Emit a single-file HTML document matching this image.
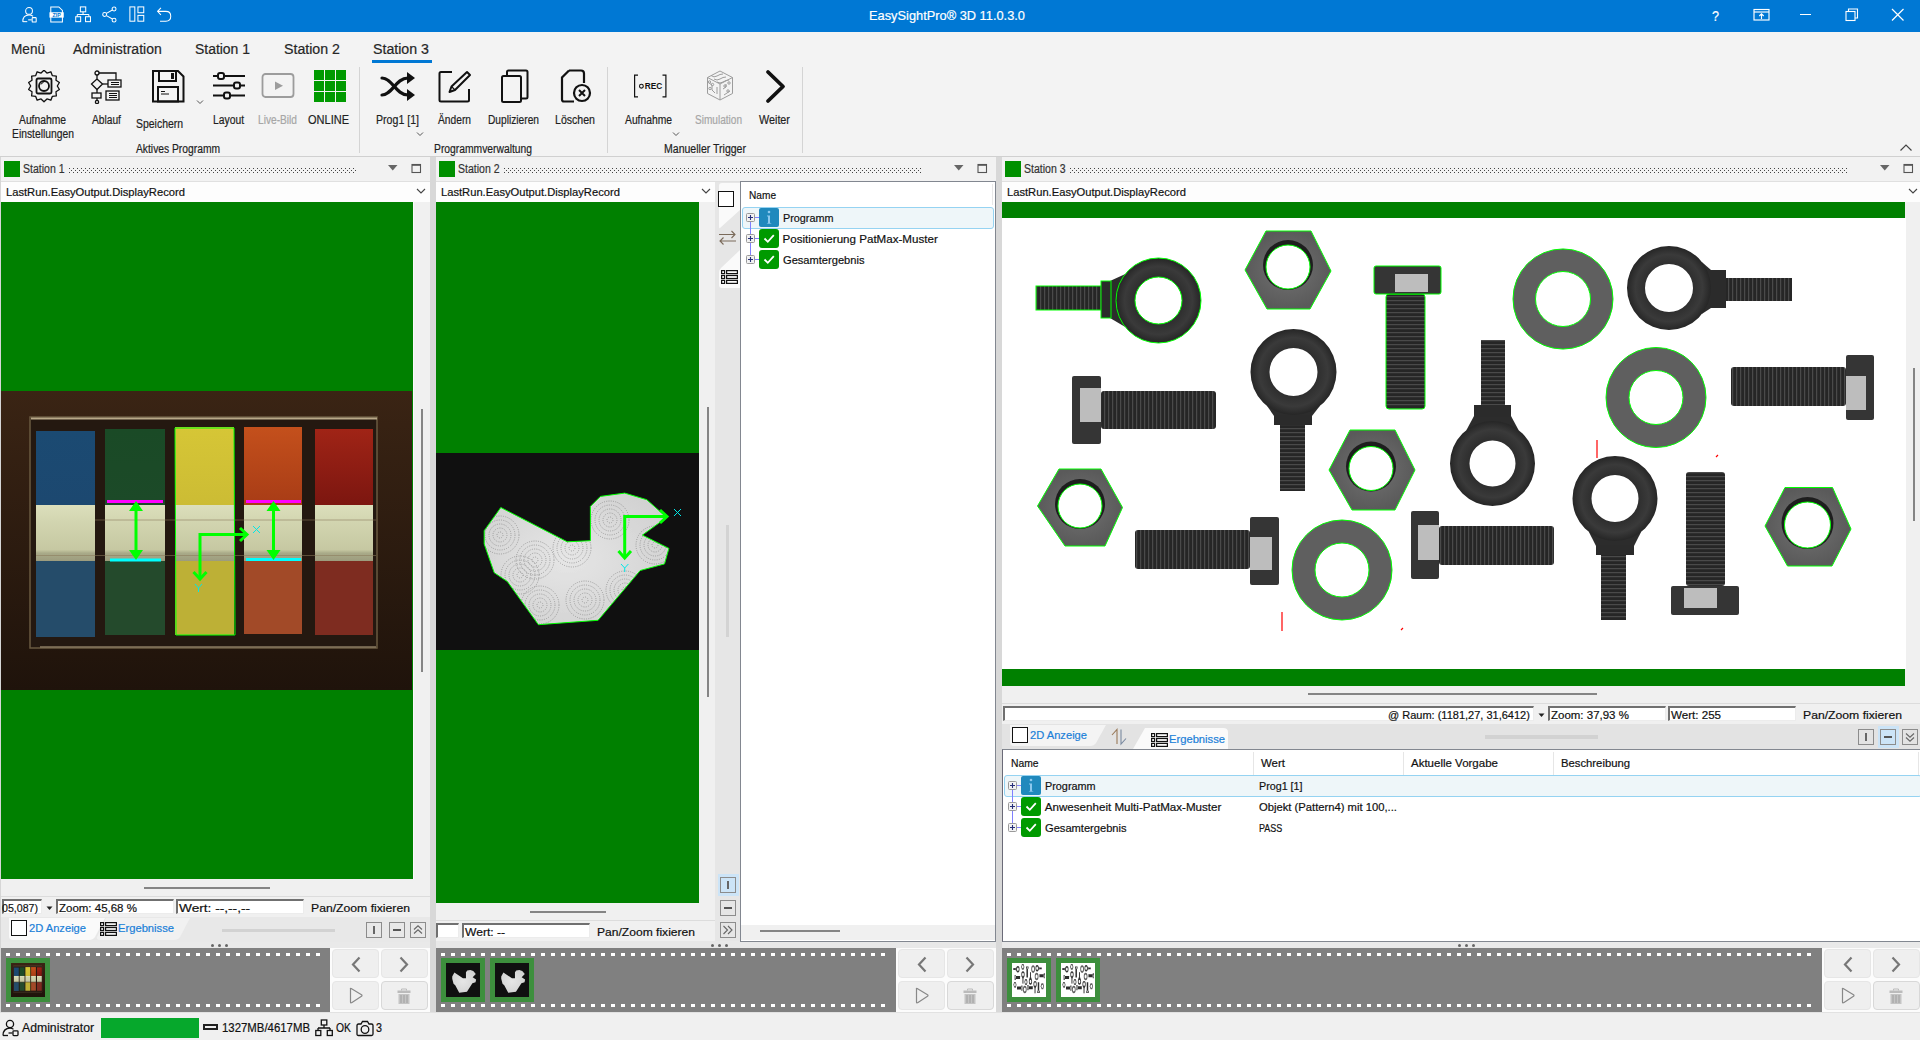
<!DOCTYPE html>
<html><head><meta charset="utf-8"><style>
html,body{margin:0;padding:0;width:1920px;height:1040px;overflow:hidden;background:#f0f0f0;position:relative;font-family:"Liberation Sans",sans-serif}
.t{position:absolute;white-space:nowrap;line-height:1.15;transform-origin:0 0;-webkit-text-stroke:0.2px currentColor}
.r{position:absolute;display:block}
</style></head><body>
<div class="r" style="left:0px;top:0px;width:1920px;height:32px;background:#0078d4;"></div>
<svg class="r" style="left:21.0px;top:6.0px;" width="16.99" height="17" viewBox="0 0 19 19"><g fill="none" stroke="#fff" stroke-width="1.15"><circle cx="9" cy="5.5" r="3.8"/><path d="M2 17.5 C2 12 5 10 9 10 C11 10 12.5 10.8 13.5 11.5"/><path d="M2 17.5 H7"/><path d="M8 15.5 H12"/><rect x="12.5" y="13" width="4.5" height="5" rx="0.8"/></g></svg>
<svg class="r" style="left:49.0px;top:6.0px;" width="15.21" height="17" viewBox="0 0 17 19"><g fill="none" stroke="#fff" stroke-width="1.15"><path d="M2 1 H11 L15 5 V18 H2 Z"/></g><rect x="0.5" y="7" width="16" height="6" fill="#fff"/><text x="8.5" y="12.3" font-size="6" font-weight="bold" text-anchor="middle" fill="#0078d4" font-family="Liberation Sans">ZIP</text></svg>
<svg class="r" style="left:75.0px;top:6.0px;" width="16.99" height="17" viewBox="0 0 19 19"><g fill="none" stroke="#fff" stroke-width="1.15"><rect x="6" y="1" width="6" height="5.5"/><path d="M9 6.5 V9.5 M2.5 9.5 H15.5 M2.5 9.5 V12 M15.5 9.5 V12"/><rect x="0.8" y="12" width="5.5" height="5.5"/><rect x="11.8" y="12" width="5.5" height="5.5"/></g></svg>
<svg class="r" style="left:102.0px;top:6.0px;" width="16.1" height="17" viewBox="0 0 18 19"><g fill="none" stroke="#fff" stroke-width="1.15"><circle cx="13.5" cy="3.3" r="2.2"/><circle cx="3" cy="9.5" r="2.2"/><circle cx="13.5" cy="15.8" r="2.2"/><path d="M5 8.3 L11.6 4.5 M5 10.7 L11.6 14.6"/></g></svg>
<svg class="r" style="left:129.0px;top:6.0px;" width="16.99" height="17" viewBox="0 0 19 19"><g fill="none" stroke="#fff" stroke-width="1.15"><rect x="1" y="1" width="5.5" height="16"/><rect x="10" y="1" width="6.5" height="6.5"/><rect x="10" y="10.5" width="6.5" height="6.5"/></g></svg>
<svg class="r" style="left:156.0px;top:6.0px;" width="16.99" height="17" viewBox="0 0 19 19"><g fill="none" stroke="#fff" stroke-width="1.15"><path d="M2 6 H11 C14.5 6 16.5 8.5 16.5 11.5 C16.5 14.5 14.5 17 11 17 H4.5"/><path d="M5.5 2 L1.8 6 L5.5 10"/></g></svg>
<div class="t" style="left:869.00px;top:8.73px;font-size:13px;color:#fff;transform:scaleX(0.9861);">EasySightPro® 3D 11.0.3.0</div>
<div class="t" style="left:1712.00px;top:6.72px;font-size:15px;color:#fff;transform:scaleX(0.8434);">?</div>
<svg class="r" style="left:1753px;top:8px;" width="18" height="14" viewBox="0 0 18 14"><g fill="none" stroke="#fff" stroke-width="1.15"><rect x="1" y="1.5" width="15" height="10.5"/><path d="M1 4 H16"/><path d="M8.5 11 V6 M6.3 8 L8.5 5.8 L10.7 8"/></g></svg>
<div class="r" style="left:1800px;top:14px;width:11px;height:1px;background:#fff;"></div>
<svg class="r" style="left:1845px;top:8px;" width="14" height="14" viewBox="0 0 14 14"><g fill="none" stroke="#fff" stroke-width="1.1"><rect x="1" y="3.5" width="9" height="9"/><path d="M3.5 3.5 V1 H12.5 V10 H10"/></g></svg>
<svg class="r" style="left:1891px;top:8px;" width="14" height="14" viewBox="0 0 14 14"><g fill="none" stroke="#fff" stroke-width="1.2"><path d="M1 1 L12.5 12.5 M12.5 1 L1 12.5"/></g></svg>
<div class="r" style="left:0px;top:32px;width:1920px;height:125px;background:#f3f3f3;"></div>
<div class="r" style="left:0px;top:156px;width:1920px;height:2px;background:#d0d0d0;"></div>
<div class="t" style="left:11.00px;top:41.33px;font-size:14px;color:#262626;transform:scaleX(0.9714);">Menü</div>
<div class="t" style="left:73.00px;top:41.33px;font-size:14px;color:#262626;">Administration</div>
<div class="t" style="left:195.00px;top:41.33px;font-size:14px;color:#262626;transform:scaleX(0.9946);">Station 1</div>
<div class="t" style="left:284.00px;top:41.33px;font-size:14px;color:#262626;transform:scaleX(1.0127);">Station 2</div>
<div class="t" style="left:373.00px;top:41.33px;font-size:14px;color:#262626;transform:scaleX(1.0127);">Station 3</div>
<div class="r" style="left:372px;top:60px;width:60px;height:3px;background:#0078d4;"></div>
<div class="t" style="left:19.00px;top:114.44px;font-size:12px;color:#1f1f1f;transform:scaleX(0.8592);">Aufnahme</div>
<div class="t" style="left:12.00px;top:127.94px;font-size:12px;color:#1f1f1f;transform:scaleX(0.8599);">Einstellungen</div>
<div class="t" style="left:92.00px;top:114.44px;font-size:12px;color:#1f1f1f;transform:scaleX(0.8504);">Ablauf</div>
<div class="t" style="left:136.00px;top:117.64px;font-size:12px;color:#1f1f1f;transform:scaleX(0.8704);">Speichern</div>
<div class="t" style="left:213.00px;top:114.44px;font-size:12px;color:#1f1f1f;transform:scaleX(0.8611);">Layout</div>
<div class="t" style="left:258.00px;top:114.44px;font-size:12px;color:#a6a6a6;transform:scaleX(0.8478);">Live-Bild</div>
<div class="t" style="left:308.00px;top:114.44px;font-size:12px;color:#1f1f1f;transform:scaleX(0.9172);">ONLINE</div>
<div class="t" style="left:136.00px;top:143.14px;font-size:12px;color:#1f1f1f;transform:scaleX(0.8571);">Aktives Programm</div>
<div class="t" style="left:376.00px;top:114.44px;font-size:12px;color:#1f1f1f;transform:scaleX(0.8830);">Prog1 [1]</div>
<div class="t" style="left:438.00px;top:114.44px;font-size:12px;color:#1f1f1f;transform:scaleX(0.8527);">Ändern</div>
<div class="t" style="left:488.00px;top:114.44px;font-size:12px;color:#1f1f1f;transform:scaleX(0.8500);">Duplizieren</div>
<div class="t" style="left:555.00px;top:114.44px;font-size:12px;color:#1f1f1f;transform:scaleX(0.8811);">Löschen</div>
<div class="t" style="left:625.00px;top:114.44px;font-size:12px;color:#1f1f1f;transform:scaleX(0.8592);">Aufnahme</div>
<div class="t" style="left:695.00px;top:114.44px;font-size:12px;color:#a6a6a6;transform:scaleX(0.8393);">Simulation</div>
<div class="t" style="left:759.00px;top:114.44px;font-size:12px;color:#1f1f1f;transform:scaleX(0.8986);">Weiter</div>
<div class="t" style="left:434.00px;top:143.14px;font-size:12px;color:#1f1f1f;transform:scaleX(0.8596);">Programmverwaltung</div>
<div class="t" style="left:664.00px;top:143.14px;font-size:12px;color:#1f1f1f;transform:scaleX(0.8779);">Manueller Trigger</div>
<div class="r" style="left:359px;top:67px;width:1px;height:86px;background:#d4d4d4;"></div>
<div class="r" style="left:607px;top:67px;width:1px;height:86px;background:#d4d4d4;"></div>
<div class="r" style="left:802px;top:67px;width:1px;height:86px;background:#d4d4d4;"></div>
<svg class="r" style="left:196px;top:99px;" width="8" height="6" viewBox="0 0 8 6"><path d="M1 1.5 L4 4.5 L7 1.5" fill="none" stroke="#555" stroke-width="1"/></svg>
<svg class="r" style="left:416px;top:131px;" width="8" height="6" viewBox="0 0 8 6"><path d="M1 1.5 L4 4.5 L7 1.5" fill="none" stroke="#555" stroke-width="1"/></svg>
<svg class="r" style="left:672px;top:131px;" width="8" height="6" viewBox="0 0 8 6"><path d="M1 1.5 L4 4.5 L7 1.5" fill="none" stroke="#555" stroke-width="1"/></svg>
<svg class="r" style="left:1899px;top:143px;" width="14" height="9" viewBox="0 0 14 9"><path d="M1.5 7.5 L7 2 L12.5 7.5" fill="none" stroke="#444" stroke-width="1.2"/></svg>
<svg class="r" style="left:28px;top:70px;" width="33" height="33" viewBox="0 0 33 33"><polygon points="16.00,0.20 18.96,3.03 22.86,1.76 24.29,5.60 28.35,6.15 27.98,10.23 31.40,12.48 29.30,16.00 31.40,19.52 27.98,21.77 28.35,25.85 24.29,26.40 22.86,30.24 18.96,28.97 16.00,31.80 13.04,28.97 9.14,30.24 7.71,26.40 3.65,25.85 4.02,21.77 0.60,19.52 2.70,16.00 0.60,12.48 4.02,10.23 3.65,6.15 7.71,5.60 9.14,1.76 13.04,3.03" fill="none" stroke="#111" stroke-width="1.3" stroke-linejoin="round"/><rect x="8.5" y="8.5" width="15" height="15" rx="1.5" fill="none" stroke="#111" stroke-width="1.8"/><circle cx="16" cy="16" r="5" fill="none" stroke="#111" stroke-width="1.8"/><path d="M13 14.5 A3 3 0 0 1 15.5 12.5" fill="none" stroke="#111" stroke-width="1"/></svg>
<svg class="r" style="left:90px;top:69px;" width="35" height="35" viewBox="0 0 35 35"><g fill="none" stroke="#111" stroke-width="1.3"><circle cx="7" cy="4" r="2"/><path d="M9 4 H26 V11"/><path d="M7 6 V10 L1.5 15 L7 20.5 L12.5 15 L7 10"/><path d="M12.5 15 H18"/><rect x="18" y="11" width="13" height="7"/><path d="M7 20.5 V24"/><rect x="2" y="24" width="9" height="5"/><path d="M7 29 V32"/><circle cx="7" cy="33" r="1.6"/><rect x="16" y="22" width="13" height="9"/></g><g stroke="#111" stroke-width="1"><path d="M21 13.5 H29 M21 15.5 H29 M19 24.5 H27 M19 26.5 H27 M19 28.5 H27"/></g></svg>
<svg class="r" style="left:152px;top:70px;" width="33" height="33" viewBox="0 0 33 33"><g fill="none" stroke="#111" stroke-width="2"><path d="M1 1 H26 L31.5 6.5 V31.5 H1 Z"/><path d="M7 1 V11 H24 V1"/><rect x="6" y="17" width="20" height="14.5"/></g><rect x="19" y="3" width="3" height="6" fill="#111"/><path d="M9 21.5 H13 M9 24 H17" stroke="#111" stroke-width="1"/></svg>
<svg class="r" style="left:212px;top:70px;" width="34" height="33" viewBox="0 0 34 33"><g stroke="#111" stroke-width="2"><path d="M1 6 H6 M12 6 H33 M1 15.5 H22 M28 15.5 H33 M1 25.5 H12 M18 25.5 H33"/></g><g fill="#f3f3f3" stroke="#111" stroke-width="2"><rect x="6" y="3" width="6" height="6" rx="2"/><rect x="22" y="12.5" width="6" height="6" rx="2"/><rect x="12" y="22.5" width="6" height="6" rx="2"/></g></svg>
<svg class="r" style="left:261px;top:73px;" width="35" height="26" viewBox="0 0 35 26"><rect x="1.5" y="1" width="31" height="23" rx="3" fill="none" stroke="#9c9c9c" stroke-width="1.8"/><path d="M14 8.5 L22 12.8 L14 17 Z" fill="#9c9c9c"/></svg>
<svg class="r" style="left:314px;top:70px;" width="33" height="33" viewBox="0 0 33 33"><rect x="0" y="0" width="10" height="10" fill="#009a00"/><rect x="11" y="0" width="10" height="10" fill="#009a00"/><rect x="22" y="0" width="10" height="10" fill="#009a00"/><rect x="0" y="11" width="10" height="10" fill="#009a00"/><rect x="11" y="11" width="10" height="10" fill="#009a00"/><rect x="22" y="11" width="10" height="10" fill="#009a00"/><rect x="0" y="22" width="10" height="10" fill="#009a00"/><rect x="11" y="22" width="10" height="10" fill="#009a00"/><rect x="22" y="22" width="10" height="10" fill="#009a00"/></svg>
<svg class="r" style="left:380px;top:71px;" width="36" height="31" viewBox="0 0 36 31"><g fill="none" stroke="#111" stroke-width="3.2" stroke-linecap="round"><path d="M2 7 C12 7 16 24 28 24"/><path d="M2 24 C12 24 16 7 28 7"/></g><path d="M27 1 L35 7 L27 13 Z M27 18 L35 24 L27 30 Z" fill="#111"/></svg>
<svg class="r" style="left:438px;top:69px;" width="35" height="35" viewBox="0 0 35 35"><g fill="none" stroke="#111" stroke-width="2" stroke-linejoin="round"><path d="M14 3 H3 Q1.5 3 1.5 4.5 V31 Q1.5 32.5 3 32.5 H29.5 Q31 32.5 31 31 V20"/><path d="M29 3 L32 6 L17 21 L11.5 23 L13.5 17.5 Z"/></g><path d="M13.5 17.5 L17 21" stroke="#111" stroke-width="1.2"/></svg>
<svg class="r" style="left:500px;top:69px;" width="30" height="35" viewBox="0 0 30 35"><g fill="none" stroke="#111" stroke-width="2"><rect x="2" y="7" width="19" height="26" rx="1.5"/><path d="M7 7 V3 Q7 1.5 8.5 1.5 H26 Q27.5 1.5 27.5 3 V28 Q27.5 29.5 26 29.5 H21"/></g></svg>
<svg class="r" style="left:560px;top:69px;" width="32" height="35" viewBox="0 0 32 35"><g fill="none" stroke="#111" stroke-width="2.2"><path d="M9 1.5 H21 Q24 1.5 24 4.5 V14"/><path d="M14 32.5 H4 Q2 32.5 2 30.5 V8.5 L9 1.5"/></g><circle cx="22" cy="24" r="8" fill="#f3f3f3" stroke="#111" stroke-width="2.2"/><path d="M19 21 L25 27 M25 21 L19 27" stroke="#111" stroke-width="2"/></svg>
<svg class="r" style="left:633px;top:74px;" width="35" height="25" viewBox="0 0 35 25"><g fill="none" stroke="#111" stroke-width="1.2"><path d="M5 1.2 H1.6 V22.8 H5"/><path d="M29.5 1.2 H32.9 V22.8 H29.5"/></g><circle cx="8.4" cy="12.2" r="1.9" fill="none" stroke="#111" stroke-width="1.1"/><text x="20.5" y="15.3" font-size="8.3" font-weight="bold" text-anchor="middle" fill="#111" font-family="Liberation Sans">REC</text></svg>
<svg class="r" style="left:705px;top:70px;" width="31" height="33" viewBox="0 0 31 33"><g fill="none" stroke="#9c9c9c" stroke-width="1" stroke-linejoin="round"><path d="M15 1 L27.5 7.5 V23.5 L15 30 L2.5 23.5 V7.5 Z"/><path d="M2.5 7.5 L15 14 L27.5 7.5 M15 14 V30"/><path d="M6 5.5 Q9 8 12 6 T18 4 M9 9 Q12 11 15 9 T21 7 M12 12 Q15 14 18 12 T24 10"/><path d="M4 13 L7 15 V20 L10 23 M12 17 V24 M18 19 L21 17 V14 M19 25 L25 21"/><circle cx="4.5" cy="12" r="1.2"/><circle cx="7.5" cy="14.5" r="1.2"/><circle cx="20" cy="16" r="1.2"/><circle cx="24" cy="13" r="1.2"/><circle cx="5" cy="18.5" r="1.2"/><circle cx="23" cy="21" r="1.2"/></g></svg>
<svg class="r" style="left:764px;top:69px;" width="23" height="35" viewBox="0 0 23 35"><path d="M4 3 L19 17.5 L4 32" fill="none" stroke="#111" stroke-width="3.8" stroke-linecap="round" stroke-linejoin="round"/></svg>
<div class="r" style="left:0px;top:157px;width:1px;height:855px;background:#d6d6d6;"></div>
<div class="r" style="left:430px;top:157px;width:6px;height:855px;background:#d8d8d8;"></div>
<div class="r" style="left:996px;top:157px;width:6px;height:855px;background:#d8d8d8;"></div>
<div class="r" style="left:1px;top:157px;width:429px;height:24px;background:#f2f2f2;"></div>
<div class="r" style="left:1px;top:181px;width:429px;height:1px;background:#e0e0e0;"></div>
<div class="r" style="left:4px;top:161px;width:16px;height:16px;background:#009000;"></div>
<div class="t" style="left:22.50px;top:161.69px;font-size:12.5px;color:#333;transform:scaleX(0.8418);">Station 1</div>
<svg class="r" style="left:69px;top:167px;" width="288" height="7" viewBox="0 0 288 7"><defs><pattern id="gp69" width="4" height="4" patternUnits="userSpaceOnUse"><rect x="0" y="1" width="1" height="1" fill="#444"/><rect x="2" y="3" width="1" height="1" fill="#444"/></pattern></defs><rect x="0" y="0" width="288" height="6" fill="url(#gp69)"/></svg>
<svg class="r" style="left:388px;top:165px;" width="10" height="6" viewBox="0 0 10 6"><path d="M0 0 H9.5 L4.75 5.5 Z" fill="#666"/></svg>
<svg class="r" style="left:411px;top:163px;" width="11" height="11" viewBox="0 0 11 11"><rect x="1" y="1.5" width="8.5" height="8" fill="none" stroke="#555" stroke-width="1.1"/><rect x="1" y="1" width="8.5" height="1.8" fill="#555"/></svg>
<div class="r" style="left:1px;top:182px;width:429px;height:20px;background:#fdfdfd;"></div>
<div class="t" style="left:5.50px;top:185.00px;font-size:11.6px;color:#111;transform:scaleX(0.9639);">LastRun.EasyOutput.DisplayRecord</div>
<svg class="r" style="left:416px;top:188px;" width="10" height="7" viewBox="0 0 10 7"><path d="M1 1 L5 5 L9 1" fill="none" stroke="#444" stroke-width="1.1"/></svg>
<div class="r" style="left:1px;top:202px;width:412px;height:677px;background:#008000;"></div>
<div class="r" style="left:413px;top:202px;width:17px;height:694px;background:#f0f0f0;"></div>
<div class="r" style="left:413px;top:202px;width:1px;height:677px;background:#fafafa;"></div>
<div class="r" style="left:421px;top:409px;width:2px;height:263px;background:#858585;"></div>
<div class="r" style="left:1px;top:879px;width:412px;height:17px;background:#f0f0f0;"></div>
<div class="r" style="left:144px;top:887px;width:126px;height:2px;background:#858585;"></div>
<div class="r" style="left:1px;top:896px;width:429px;height:1px;background:#dcdcdc;"></div>
<div class="r" style="left:1px;top:897px;width:429px;height:20px;background:#f0f0f0;"></div>
<div class="r" style="left:436px;top:157px;width:560px;height:24px;background:#f2f2f2;"></div>
<div class="r" style="left:436px;top:181px;width:560px;height:1px;background:#e0e0e0;"></div>
<div class="r" style="left:439px;top:161px;width:16px;height:16px;background:#009000;"></div>
<div class="t" style="left:457.50px;top:161.69px;font-size:12.5px;color:#333;transform:scaleX(0.8418);">Station 2</div>
<svg class="r" style="left:504px;top:167px;" width="418" height="7" viewBox="0 0 418 7"><defs><pattern id="gp504" width="4" height="4" patternUnits="userSpaceOnUse"><rect x="0" y="1" width="1" height="1" fill="#444"/><rect x="2" y="3" width="1" height="1" fill="#444"/></pattern></defs><rect x="0" y="0" width="418" height="6" fill="url(#gp504)"/></svg>
<svg class="r" style="left:954px;top:165px;" width="10" height="6" viewBox="0 0 10 6"><path d="M0 0 H9.5 L4.75 5.5 Z" fill="#666"/></svg>
<svg class="r" style="left:977px;top:163px;" width="11" height="11" viewBox="0 0 11 11"><rect x="1" y="1.5" width="8.5" height="8" fill="none" stroke="#555" stroke-width="1.1"/><rect x="1" y="1" width="8.5" height="1.8" fill="#555"/></svg>
<div class="r" style="left:436px;top:182px;width:279px;height:20px;background:#fdfdfd;"></div>
<div class="t" style="left:440.50px;top:185.00px;font-size:11.6px;color:#111;transform:scaleX(0.9639);">LastRun.EasyOutput.DisplayRecord</div>
<svg class="r" style="left:701px;top:188px;" width="10" height="7" viewBox="0 0 10 7"><path d="M1 1 L5 5 L9 1" fill="none" stroke="#444" stroke-width="1.1"/></svg>
<div class="r" style="left:436px;top:202px;width:263px;height:701px;background:#008000;"></div>
<div class="r" style="left:699px;top:202px;width:16px;height:718px;background:#f0f0f0;"></div>
<div class="r" style="left:707px;top:407px;width:2px;height:290px;background:#858585;"></div>
<div class="r" style="left:436px;top:903px;width:263px;height:17px;background:#f0f0f0;"></div>
<div class="r" style="left:530px;top:911px;width:76px;height:2px;background:#858585;"></div>
<div class="r" style="left:436px;top:920px;width:279px;height:1px;background:#dcdcdc;"></div>
<div class="r" style="left:436px;top:921px;width:279px;height:20px;background:#f0f0f0;"></div>
<div class="r" style="left:436px;top:941px;width:560px;height:7px;background:#e8e8e8;"></div>
<div class="r" style="left:1002px;top:157px;width:918px;height:24px;background:#f2f2f2;"></div>
<div class="r" style="left:1002px;top:181px;width:918px;height:1px;background:#e0e0e0;"></div>
<div class="r" style="left:1005px;top:161px;width:16px;height:16px;background:#009000;"></div>
<div class="t" style="left:1023.50px;top:161.69px;font-size:12.5px;color:#333;transform:scaleX(0.8418);">Station 3</div>
<svg class="r" style="left:1070px;top:167px;" width="777" height="7" viewBox="0 0 777 7"><defs><pattern id="gp1070" width="4" height="4" patternUnits="userSpaceOnUse"><rect x="0" y="1" width="1" height="1" fill="#444"/><rect x="2" y="3" width="1" height="1" fill="#444"/></pattern></defs><rect x="0" y="0" width="777" height="6" fill="url(#gp1070)"/></svg>
<svg class="r" style="left:1880px;top:165px;" width="10" height="6" viewBox="0 0 10 6"><path d="M0 0 H9.5 L4.75 5.5 Z" fill="#666"/></svg>
<svg class="r" style="left:1903px;top:163px;" width="11" height="11" viewBox="0 0 11 11"><rect x="1" y="1.5" width="8.5" height="8" fill="none" stroke="#555" stroke-width="1.1"/><rect x="1" y="1" width="8.5" height="1.8" fill="#555"/></svg>
<div class="r" style="left:1002px;top:182px;width:918px;height:20px;background:#fdfdfd;"></div>
<div class="t" style="left:1006.50px;top:185.00px;font-size:11.6px;color:#111;transform:scaleX(0.9639);">LastRun.EasyOutput.DisplayRecord</div>
<svg class="r" style="left:1908px;top:188px;" width="10" height="7" viewBox="0 0 10 7"><path d="M1 1 L5 5 L9 1" fill="none" stroke="#444" stroke-width="1.1"/></svg>
<div class="r" style="left:1002px;top:202px;width:903px;height:16px;background:#008000;"></div>
<div class="r" style="left:1002px;top:218px;width:904px;height:451px;background:#ffffff;"></div>
<div class="r" style="left:1002px;top:669px;width:903px;height:17px;background:#008000;"></div>
<div class="r" style="left:1906px;top:202px;width:14px;height:501px;background:#f0f0f0;"></div>
<div class="r" style="left:1913px;top:368px;width:2px;height:153px;background:#858585;"></div>
<div class="r" style="left:1002px;top:686px;width:904px;height:17px;background:#f0f0f0;"></div>
<div class="r" style="left:1308px;top:693px;width:289px;height:2px;background:#858585;"></div>
<div class="r" style="left:1002px;top:703px;width:918px;height:1px;background:#dcdcdc;"></div>
<div class="r" style="left:1002px;top:704px;width:918px;height:20px;background:#f0f0f0;"></div>
<div class="r" style="left:2px;top:899px;width:40px;height:15px;background:#fff;box-sizing:border-box;border-top:2px solid #707070;border-left:2px solid #707070;border-right:1px solid #ececec;border-bottom:1px solid #ececec"></div>
<div class="t" style="left:2.00px;top:901.30px;font-size:11.6px;color:#111;transform:scaleX(0.9160);">05,087)</div>
<svg class="r" style="left:46px;top:906px;" width="7" height="5" viewBox="0 0 7 5"><path d="M0.5 0.5 H6.5 L3.5 4 Z" fill="#222"/></svg>
<div class="r" style="left:56px;top:899px;width:118px;height:15px;background:#fff;box-sizing:border-box;border-top:2px solid #707070;border-left:2px solid #707070;border-right:1px solid #ececec;border-bottom:1px solid #ececec"></div>
<div class="t" style="left:59.00px;top:901.30px;font-size:11.6px;color:#111;transform:scaleX(0.9911);">Zoom: 45,68 %</div>
<div class="r" style="left:176px;top:899px;width:128px;height:15px;background:#fff;box-sizing:border-box;border-top:2px solid #707070;border-left:2px solid #707070;border-right:1px solid #ececec;border-bottom:1px solid #ececec"></div>
<div class="t" style="left:179.00px;top:901.30px;font-size:11.6px;color:#111;transform:scaleX(1.1774);">Wert: --,--,--</div>
<div class="t" style="left:311.00px;top:901.30px;font-size:11.6px;color:#111;transform:scaleX(1.0521);">Pan/Zoom fixieren</div>
<div class="r" style="left:436px;top:923px;width:23px;height:15px;background:#fff;box-sizing:border-box;border-top:2px solid #707070;border-left:2px solid #707070;border-right:1px solid #ececec;border-bottom:1px solid #ececec"></div>
<div class="r" style="left:462px;top:923px;width:128px;height:15px;background:#fff;box-sizing:border-box;border-top:2px solid #707070;border-left:2px solid #707070;border-right:1px solid #ececec;border-bottom:1px solid #ececec"></div>
<div class="t" style="left:465.00px;top:925.10px;font-size:11.6px;color:#111;transform:scaleX(1.0417);">Wert: --</div>
<div class="t" style="left:597.00px;top:925.10px;font-size:11.6px;color:#111;transform:scaleX(1.0414);">Pan/Zoom fixieren</div>
<div class="r" style="left:1003px;top:706px;width:531px;height:15px;background:#fff;box-sizing:border-box;border-top:2px solid #707070;border-left:2px solid #707070;border-right:1px solid #ececec;border-bottom:1px solid #ececec"></div>
<div class="t" style="left:1388.00px;top:707.80px;font-size:11.6px;color:#111;transform:scaleX(0.9492);">@ Raum: (1181,27, 31,6412)</div>
<svg class="r" style="left:1538px;top:713px;" width="7" height="5" viewBox="0 0 7 5"><path d="M0.5 0.5 H6.5 L3.5 4 Z" fill="#222"/></svg>
<div class="r" style="left:1548px;top:706px;width:118px;height:15px;background:#fff;box-sizing:border-box;border-top:2px solid #707070;border-left:2px solid #707070;border-right:1px solid #ececec;border-bottom:1px solid #ececec"></div>
<div class="t" style="left:1551.00px;top:707.80px;font-size:11.6px;color:#111;transform:scaleX(0.9911);">Zoom: 37,93 %</div>
<div class="r" style="left:1668px;top:706px;width:128px;height:15px;background:#fff;box-sizing:border-box;border-top:2px solid #707070;border-left:2px solid #707070;border-right:1px solid #ececec;border-bottom:1px solid #ececec"></div>
<div class="t" style="left:1671.00px;top:707.80px;font-size:11.6px;color:#111;">Wert: 255</div>
<div class="t" style="left:1803.00px;top:707.80px;font-size:11.6px;color:#111;transform:scaleX(1.0521);">Pan/Zoom fixieren</div>
<div class="r" style="left:1px;top:917px;width:429px;height:25px;background:#e8e8e8;"></div>
<svg class="r" style="left:9px;top:918px;" width="100" height="23" viewBox="0 0 100 23"><path d="M0 0 H96 L86 19 Q84 22 80 22 H4 Q0 22 0 18 Z" fill="#fafafa"/></svg>
<svg class="r" style="left:96px;top:918px;" width="100" height="23" viewBox="0 0 100 23"><path d="M10 0 H94 L84 19 Q82 22 78 22 H4 Q0 22 1 19 Z" fill="#f1f1f1"/></svg>
<div class="r" style="left:11px;top:920px;width:16px;height:16px;background:#fff;box-sizing:border-box;border:1.3px solid #111"></div>
<div class="t" style="left:29.00px;top:921.00px;font-size:11.6px;color:#1a7fd8;transform:scaleX(0.9612);">2D Anzeige</div>
<svg class="r" style="left:100px;top:922px;" width="17" height="14" viewBox="0 0 17 14"><g fill="none" stroke="#111" stroke-width="1.2"><rect x="0.6" y="0.6" width="3" height="3"/><rect x="0.6" y="5.5" width="3" height="3"/><rect x="0.6" y="10.4" width="3" height="3"/><rect x="5.6" y="0.6" width="10.8" height="3"/><rect x="5.6" y="5.5" width="10.8" height="3"/><rect x="5.6" y="10.4" width="10.8" height="3"/></g></svg>
<div class="t" style="left:118.00px;top:921.00px;font-size:11.6px;color:#1a7fd8;transform:scaleX(0.9655);">Ergebnisse</div>
<div class="r" style="left:222px;top:929px;width:113px;height:3px;background:#d2d2d2;"></div>
<div class="r" style="left:366px;top:922px;width:16px;height:16px;background:none;box-sizing:border-box;border:1px solid #8c8c8c"></div>
<div class="r" style="left:373px;top:926px;width:1.5px;height:8px;background:#666;"></div>
<div class="r" style="left:389px;top:922px;width:16px;height:16px;background:none;box-sizing:border-box;border:1px solid #8c8c8c"></div>
<div class="r" style="left:393px;top:929px;width:8px;height:2px;background:#555;"></div>
<div class="r" style="left:410px;top:922px;width:16px;height:16px;background:none;box-sizing:border-box;border:1px solid #8c8c8c"></div>
<svg class="r" style="left:410px;top:922px;" width="16" height="16" viewBox="0 0 16 16"><path d="M4 7.5 L8 3.8 L12 7.5 M4 11.5 L8 7.8 L12 11.5" fill="none" stroke="#666" stroke-width="1.1"/></svg>
<div class="r" style="left:1px;top:942px;width:429px;height:6px;background:#e9e9e9;"></div>
<div class="r" style="left:210.5px;top:943.5px;width:3px;height:3px;border-radius:50%;background:#666"></div>
<div class="r" style="left:217.5px;top:943.5px;width:3px;height:3px;border-radius:50%;background:#666"></div>
<div class="r" style="left:224.5px;top:943.5px;width:3px;height:3px;border-radius:50%;background:#666"></div>
<div class="r" style="left:715px;top:182px;width:25px;height:759px;background:#e6e6e6;"></div>
<svg class="r" style="left:715px;top:182px;" width="25" height="60" viewBox="0 0 25 60"><path d="M4 4 Q4 1 7 1 H25 V28 L5 46 Q4 47 4 44 Z" fill="#fafafa"/></svg>
<div class="r" style="left:718px;top:191px;width:16px;height:16px;background:#fff;box-sizing:border-box;border:1.3px solid #111"></div>
<svg class="r" style="left:718px;top:229px;" width="19" height="17" viewBox="0 0 19 17"><g fill="none" stroke="#7a6a5a" stroke-width="1.1"><path d="M1 5.5 H17 M13.5 2 L17 5.5 L13.5 9"/><path d="M18 12 H2 M5.5 8.5 L2 12 L5.5 15.5"/></g></svg>
<svg class="r" style="left:715px;top:250px;" width="25" height="40" viewBox="0 0 25 40"><path d="M25 0 V38 H7 Q4 38 4 35 V22 Q4 20 6 18 Z" fill="#fafafa"/></svg>
<svg class="r" style="left:721px;top:270px;" width="17" height="14" viewBox="0 0 17 14"><g fill="none" stroke="#111" stroke-width="1.2"><rect x="0.6" y="0.6" width="3" height="3"/><rect x="0.6" y="5.5" width="3" height="3"/><rect x="0.6" y="10.4" width="3" height="3"/><rect x="5.6" y="0.6" width="10.8" height="3"/><rect x="5.6" y="5.5" width="10.8" height="3"/><rect x="5.6" y="10.4" width="10.8" height="3"/></g></svg>
<div class="r" style="left:726px;top:525px;width:3px;height:112px;background:#d3d3d3;"></div>
<div class="r" style="left:718px;top:874px;width:21px;height:22px;background:#cce4f7;"></div>
<div class="r" style="left:720px;top:877px;width:16px;height:16px;background:none;box-sizing:border-box;border:1px solid #8c8c8c"></div>
<div class="r" style="left:727px;top:881px;width:1.5px;height:8px;background:#666;"></div>
<div class="r" style="left:720px;top:900px;width:16px;height:16px;background:none;box-sizing:border-box;border:1px solid #8c8c8c"></div>
<div class="r" style="left:724px;top:907px;width:8px;height:2px;background:#555;"></div>
<div class="r" style="left:720px;top:922px;width:16px;height:16px;background:none;box-sizing:border-box;border:1px solid #8c8c8c"></div>
<svg class="r" style="left:720px;top:922px;" width="16" height="16" viewBox="0 0 16 16"><path d="M3.5 4 L7.5 8 L3.5 12 M8 4 L12 8 L8 12" fill="none" stroke="#666" stroke-width="1.1"/></svg>
<div class="r" style="left:710.5px;top:943.5px;width:3px;height:3px;border-radius:50%;background:#666"></div>
<div class="r" style="left:717.5px;top:943.5px;width:3px;height:3px;border-radius:50%;background:#666"></div>
<div class="r" style="left:724.5px;top:943.5px;width:3px;height:3px;border-radius:50%;background:#666"></div>
<div class="r" style="left:1002px;top:724px;width:918px;height:25px;background:#e3e3e3;"></div>
<svg class="r" style="left:1010px;top:725px;" width="100" height="22" viewBox="0 0 100 22"><path d="M0 0 H96 L86 18 Q84 21 80 21 H4 Q0 21 0 17 Z" fill="#f4f4f4"/></svg>
<div class="r" style="left:1012px;top:727px;width:16px;height:16px;background:#fff;box-sizing:border-box;border:1.3px solid #111"></div>
<div class="t" style="left:1030.00px;top:728.30px;font-size:11.6px;color:#1a7fd8;transform:scaleX(0.9612);">2D Anzeige</div>
<svg class="r" style="left:1111px;top:728px;" width="18" height="18" viewBox="0 0 18 18"><g fill="none" stroke-width="1.1"><path d="M6 16 V1.5 L1 7" stroke="#9a7a5a"/><path d="M10 1.5 V16 L15 10.5" stroke="#7a8aa0"/></g></svg>
<svg class="r" style="left:1133px;top:728px;" width="96" height="21" viewBox="0 0 96 21"><path d="M12 0 Q13 -1 16 0 H90 Q95 0 95 4 V21 H0 Z" fill="#fafafa"/></svg>
<svg class="r" style="left:1151px;top:733px;" width="17" height="14" viewBox="0 0 17 14"><g fill="none" stroke="#111" stroke-width="1.2"><rect x="0.6" y="0.6" width="3" height="3"/><rect x="0.6" y="5.5" width="3" height="3"/><rect x="0.6" y="10.4" width="3" height="3"/><rect x="5.6" y="0.6" width="10.8" height="3"/><rect x="5.6" y="5.5" width="10.8" height="3"/><rect x="5.6" y="10.4" width="10.8" height="3"/></g></svg>
<div class="t" style="left:1169.00px;top:732.30px;font-size:11.6px;color:#1a7fd8;transform:scaleX(0.9655);">Ergebnisse</div>
<div class="r" style="left:1485px;top:735px;width:113px;height:4px;background:#d2d2d2;"></div>
<div class="r" style="left:1858px;top:729px;width:16px;height:16px;background:none;box-sizing:border-box;border:1px solid #8c8c8c"></div>
<div class="r" style="left:1865px;top:733px;width:1.5px;height:8px;background:#666;"></div>
<div class="r" style="left:1878px;top:726px;width:21px;height:22px;background:#cce4f7;"></div>
<div class="r" style="left:1880px;top:729px;width:16px;height:16px;background:none;box-sizing:border-box;border:1px solid #8c8c8c"></div>
<div class="r" style="left:1884px;top:736px;width:8px;height:2px;background:#555;"></div>
<div class="r" style="left:1902px;top:729px;width:16px;height:16px;background:none;box-sizing:border-box;border:1px solid #8c8c8c"></div>
<svg class="r" style="left:1902px;top:729px;" width="16" height="16" viewBox="0 0 16 16"><path d="M4 4.5 L8 8.2 L12 4.5 M4 8.5 L8 12.2 L12 8.5" fill="none" stroke="#666" stroke-width="1.1"/></svg>
<div class="r" style="left:1002px;top:941px;width:918px;height:7px;background:#e9e9e9;"></div>
<div class="r" style="left:1457.5px;top:943.5px;width:3px;height:3px;border-radius:50%;background:#666"></div>
<div class="r" style="left:1464.5px;top:943.5px;width:3px;height:3px;border-radius:50%;background:#666"></div>
<div class="r" style="left:1471.5px;top:943.5px;width:3px;height:3px;border-radius:50%;background:#666"></div>
<div class="r" style="left:0px;top:1012px;width:1920px;height:28px;background:#f0f0f0;"></div>
<div class="r" style="left:0px;top:1012px;width:1920px;height:1px;background:#e2e2e2;"></div>
<svg class="r" style="left:2px;top:1019px;" width="18" height="18" viewBox="0 0 18 18"><g fill="none" stroke="#111" stroke-width="1.3"><circle cx="8" cy="5" r="3.6"/><path d="M1 16.5 C1 11.5 4 9.2 8 9.2 C9.5 9.2 10.5 9.6 11.5 10.2"/><path d="M1 16.5 H6"/><path d="M6.5 14 H10.5"/><rect x="11" y="11.8" width="5" height="4.8" rx="0.8"/></g></svg>
<div class="t" style="left:22.00px;top:1020.69px;font-size:12.5px;color:#111;transform:scaleX(0.9783);">Administrator</div>
<div class="r" style="left:101px;top:1018px;width:98px;height:20px;background:#06a82c;"></div>
<div class="r" style="left:203px;top:1024px;width:15px;height:6px;background:#222;"></div>
<div class="r" style="left:205px;top:1026px;width:11px;height:2px;background:#f0f0f0;"></div>
<div class="t" style="left:222.00px;top:1020.69px;font-size:12.5px;color:#111;transform:scaleX(0.9110);">1327MB/4617MB</div>
<svg class="r" style="left:315px;top:1019px;" width="18" height="18" viewBox="0 0 18 18"><g fill="none" stroke="#111" stroke-width="1.3"><rect x="6.3" y="1" width="5.5" height="5"/><path d="M9 6 V9 M3 9 H15 M3 9 V11.5 M15 9 V11.5"/><rect x="0.8" y="11.5" width="5" height="5"/><rect x="12.3" y="11.5" width="5" height="5"/></g></svg>
<div class="t" style="left:336.00px;top:1020.69px;font-size:12.5px;color:#111;transform:scaleX(0.8287);">OK</div>
<svg class="r" style="left:356px;top:1020px;" width="18" height="17" viewBox="0 0 18 17"><g fill="none" stroke="#111" stroke-width="1.3"><path d="M1 5.5 Q1 4 2.5 4 H5 L6.5 1.5 H11.5 L13 4 H15.5 Q17 4 17 5.5 V14 Q17 15.5 15.5 15.5 H2.5 Q1 15.5 1 14 Z"/><circle cx="9" cy="9.5" r="3.8"/></g></svg>
<div class="t" style="left:376.00px;top:1020.69px;font-size:12.5px;color:#111;transform:scaleX(0.8571);">3</div>
<svg class="r" style="left:1px;top:391px" width="411" height="299" viewBox="1 391 411 299"><defs><linearGradient id="bgm" x1="0" y1="0" x2="0" y2="1"><stop offset="0" stop-color="#3a2414"/><stop offset="1" stop-color="#1f130b"/></linearGradient><linearGradient id="bandm" x1="0" y1="0" x2="0" y2="1"><stop offset="0" stop-color="#dcdfbc"/><stop offset="0.3" stop-color="#d2d5b0"/><stop offset="0.8" stop-color="#c6c8a2"/><stop offset="0.86" stop-color="#a9aa88"/><stop offset="1" stop-color="#9c9c7e"/></linearGradient></defs><rect x="1" y="391" width="411" height="299" fill="url(#bgm)"/><rect x="30" y="417" width="347" height="231" fill="#241810" stroke="#6a5a40" stroke-width="1.5"/><path d="M31 418.5 H377" stroke="#b8a888" stroke-width="2"/><path d="M40 647 H376" stroke="#8a7a60" stroke-width="1.5"/><linearGradient id="tgm0" x1="0" y1="0" x2="0" y2="1"><stop offset="0" stop-color="#1b4a72"/><stop offset="1" stop-color="#1c4870"/></linearGradient><rect x="36" y="431" width="59" height="74" fill="url(#tgm0)"/><rect x="36" y="505" width="59" height="56" fill="url(#bandm)"/><rect x="36" y="561" width="59" height="76" fill="#254c6a"/><linearGradient id="tgm1" x1="0" y1="0" x2="0" y2="1"><stop offset="0" stop-color="#1a4a26"/><stop offset="1" stop-color="#1c4a28"/></linearGradient><rect x="105" y="429" width="60" height="76" fill="url(#tgm1)"/><rect x="105" y="505" width="60" height="56" fill="url(#bandm)"/><rect x="105" y="561" width="60" height="74" fill="#244a2c"/><linearGradient id="tgm2" x1="0" y1="0" x2="0" y2="1"><stop offset="0" stop-color="#d6c636"/><stop offset="1" stop-color="#ccbc34"/></linearGradient><rect x="175" y="427" width="59" height="78" fill="url(#tgm2)"/><rect x="175" y="505" width="59" height="56" fill="url(#bandm)"/><rect x="175" y="561" width="59" height="74" fill="#bdb036"/><linearGradient id="tgm3" x1="0" y1="0" x2="0" y2="1"><stop offset="0" stop-color="#c4501c"/><stop offset="1" stop-color="#a83c16"/></linearGradient><rect x="244" y="427" width="58" height="78" fill="url(#tgm3)"/><rect x="244" y="505" width="58" height="56" fill="url(#bandm)"/><rect x="244" y="561" width="58" height="73" fill="#a24a28"/><linearGradient id="tgm4" x1="0" y1="0" x2="0" y2="1"><stop offset="0" stop-color="#a02416"/><stop offset="1" stop-color="#7c1610"/></linearGradient><rect x="315" y="429" width="58" height="76" fill="url(#tgm4)"/><rect x="315" y="505" width="58" height="56" fill="url(#bandm)"/><rect x="315" y="561" width="58" height="74" fill="#7e2c20"/><path d="M95 520 H376 M36 555.5 H376" stroke="#8a7a5a" stroke-width="0.8" opacity="0.7"/><path d="M175 428 H234 L235 635 H176 Z" fill="none" stroke="#00ff00" stroke-width="1"/><path d="M107 501.5 H163 M246 501.5 H301" stroke="#ff00ff" stroke-width="3"/><path d="M110 560 H161 M246 559.5 H301" stroke="#00ffff" stroke-width="3"/><path d="M136 506 V555" stroke="#00ff00" stroke-width="3"/><path d="M129 511 L136 501 L143 511 Z M129 550 L136 560 L143 550 Z" fill="#00ff00"/><path d="M273.5 506 V555" stroke="#00ff00" stroke-width="3"/><path d="M266.5 511 L273.5 501 L280.5 511 Z M266.5 550 L273.5 560 L280.5 550 Z" fill="#00ff00"/><path d="M246 534.5 H200 V578" fill="none" stroke="#00ff00" stroke-width="3"/><path d="M240 528 L247 534.5 L240 541" fill="none" stroke="#00ff00" stroke-width="3"/><path d="M193.5 572 L200 579 L206.5 572" fill="none" stroke="#00ff00" stroke-width="3"/><path d="M253 526 L260 533 M260 526 L253 533" stroke="#00e8e8" stroke-width="1"/><path d="M195 584 L198.5 588 L202 584 M198.5 588 V592" fill="none" stroke="#00e8e8" stroke-width="1"/></svg>
<svg class="r" style="left:436px;top:453px" width="263" height="197" viewBox="436 453 263 197"><rect x="436" y="453" width="263" height="197" fill="#101010"/><defs><clipPath id="pcm"><polygon points="500.8,507.5 484.2,530.7 484.2,544 494.2,572.7 507.4,581.6 538.4,624.7 598.1,620.3 640.2,570.5 664.5,563.9 668.9,548.4 642.4,535.1 666.7,517.4 646.8,499.7 624.7,493.1 600.4,496.4 590.4,506.4 590.4,540.7 567.2,541.8"/></clipPath><radialGradient id="pgm" cx="0.45" cy="0.5" r="0.6"><stop offset="0" stop-color="#e6e6e6"/><stop offset="1" stop-color="#d2d2d2"/></radialGradient></defs><polygon points="500.8,507.5 484.2,530.7 484.2,544 494.2,572.7 507.4,581.6 538.4,624.7 598.1,620.3 640.2,570.5 664.5,563.9 668.9,548.4 642.4,535.1 666.7,517.4 646.8,499.7 624.7,493.1 600.4,496.4 590.4,506.4 590.4,540.7 567.2,541.8" fill="url(#pgm)"/><g clip-path="url(#pcm)" opacity="0.9"><circle cx="500" cy="535" r="3" fill="none" stroke="#8c8c8c" stroke-width="0.9" stroke-dasharray="1 1.3"/><circle cx="500" cy="535" r="7" fill="none" stroke="#8c8c8c" stroke-width="0.9" stroke-dasharray="1 1.3"/><circle cx="500" cy="535" r="11" fill="none" stroke="#8c8c8c" stroke-width="0.9" stroke-dasharray="1 1.3"/><circle cx="500" cy="535" r="15" fill="none" stroke="#8c8c8c" stroke-width="0.9" stroke-dasharray="1 1.3"/><circle cx="500" cy="535" r="19" fill="none" stroke="#8c8c8c" stroke-width="0.9" stroke-dasharray="1 1.3"/><circle cx="535" cy="560" r="3" fill="none" stroke="#8c8c8c" stroke-width="0.9" stroke-dasharray="1 1.3"/><circle cx="535" cy="560" r="7" fill="none" stroke="#8c8c8c" stroke-width="0.9" stroke-dasharray="1 1.3"/><circle cx="535" cy="560" r="11" fill="none" stroke="#8c8c8c" stroke-width="0.9" stroke-dasharray="1 1.3"/><circle cx="535" cy="560" r="15" fill="none" stroke="#8c8c8c" stroke-width="0.9" stroke-dasharray="1 1.3"/><circle cx="535" cy="560" r="19" fill="none" stroke="#8c8c8c" stroke-width="0.9" stroke-dasharray="1 1.3"/><circle cx="572" cy="548" r="3" fill="none" stroke="#8c8c8c" stroke-width="0.9" stroke-dasharray="1 1.3"/><circle cx="572" cy="548" r="7" fill="none" stroke="#8c8c8c" stroke-width="0.9" stroke-dasharray="1 1.3"/><circle cx="572" cy="548" r="11" fill="none" stroke="#8c8c8c" stroke-width="0.9" stroke-dasharray="1 1.3"/><circle cx="572" cy="548" r="15" fill="none" stroke="#8c8c8c" stroke-width="0.9" stroke-dasharray="1 1.3"/><circle cx="572" cy="548" r="19" fill="none" stroke="#8c8c8c" stroke-width="0.9" stroke-dasharray="1 1.3"/><circle cx="610" cy="520" r="3" fill="none" stroke="#8c8c8c" stroke-width="0.9" stroke-dasharray="1 1.3"/><circle cx="610" cy="520" r="7" fill="none" stroke="#8c8c8c" stroke-width="0.9" stroke-dasharray="1 1.3"/><circle cx="610" cy="520" r="11" fill="none" stroke="#8c8c8c" stroke-width="0.9" stroke-dasharray="1 1.3"/><circle cx="610" cy="520" r="15" fill="none" stroke="#8c8c8c" stroke-width="0.9" stroke-dasharray="1 1.3"/><circle cx="610" cy="520" r="19" fill="none" stroke="#8c8c8c" stroke-width="0.9" stroke-dasharray="1 1.3"/><circle cx="625" cy="590" r="3" fill="none" stroke="#8c8c8c" stroke-width="0.9" stroke-dasharray="1 1.3"/><circle cx="625" cy="590" r="7" fill="none" stroke="#8c8c8c" stroke-width="0.9" stroke-dasharray="1 1.3"/><circle cx="625" cy="590" r="11" fill="none" stroke="#8c8c8c" stroke-width="0.9" stroke-dasharray="1 1.3"/><circle cx="625" cy="590" r="15" fill="none" stroke="#8c8c8c" stroke-width="0.9" stroke-dasharray="1 1.3"/><circle cx="625" cy="590" r="19" fill="none" stroke="#8c8c8c" stroke-width="0.9" stroke-dasharray="1 1.3"/><circle cx="655" cy="545" r="3" fill="none" stroke="#8c8c8c" stroke-width="0.9" stroke-dasharray="1 1.3"/><circle cx="655" cy="545" r="7" fill="none" stroke="#8c8c8c" stroke-width="0.9" stroke-dasharray="1 1.3"/><circle cx="655" cy="545" r="11" fill="none" stroke="#8c8c8c" stroke-width="0.9" stroke-dasharray="1 1.3"/><circle cx="655" cy="545" r="15" fill="none" stroke="#8c8c8c" stroke-width="0.9" stroke-dasharray="1 1.3"/><circle cx="655" cy="545" r="19" fill="none" stroke="#8c8c8c" stroke-width="0.9" stroke-dasharray="1 1.3"/><circle cx="540" cy="605" r="3" fill="none" stroke="#8c8c8c" stroke-width="0.9" stroke-dasharray="1 1.3"/><circle cx="540" cy="605" r="7" fill="none" stroke="#8c8c8c" stroke-width="0.9" stroke-dasharray="1 1.3"/><circle cx="540" cy="605" r="11" fill="none" stroke="#8c8c8c" stroke-width="0.9" stroke-dasharray="1 1.3"/><circle cx="540" cy="605" r="15" fill="none" stroke="#8c8c8c" stroke-width="0.9" stroke-dasharray="1 1.3"/><circle cx="540" cy="605" r="19" fill="none" stroke="#8c8c8c" stroke-width="0.9" stroke-dasharray="1 1.3"/><circle cx="585" cy="600" r="3" fill="none" stroke="#8c8c8c" stroke-width="0.9" stroke-dasharray="1 1.3"/><circle cx="585" cy="600" r="7" fill="none" stroke="#8c8c8c" stroke-width="0.9" stroke-dasharray="1 1.3"/><circle cx="585" cy="600" r="11" fill="none" stroke="#8c8c8c" stroke-width="0.9" stroke-dasharray="1 1.3"/><circle cx="585" cy="600" r="15" fill="none" stroke="#8c8c8c" stroke-width="0.9" stroke-dasharray="1 1.3"/><circle cx="585" cy="600" r="19" fill="none" stroke="#8c8c8c" stroke-width="0.9" stroke-dasharray="1 1.3"/><circle cx="520" cy="575" r="3" fill="none" stroke="#8c8c8c" stroke-width="0.9" stroke-dasharray="1 1.3"/><circle cx="520" cy="575" r="7" fill="none" stroke="#8c8c8c" stroke-width="0.9" stroke-dasharray="1 1.3"/><circle cx="520" cy="575" r="11" fill="none" stroke="#8c8c8c" stroke-width="0.9" stroke-dasharray="1 1.3"/><circle cx="520" cy="575" r="15" fill="none" stroke="#8c8c8c" stroke-width="0.9" stroke-dasharray="1 1.3"/><circle cx="520" cy="575" r="19" fill="none" stroke="#8c8c8c" stroke-width="0.9" stroke-dasharray="1 1.3"/></g><polygon points="500.8,507.5 484.2,530.7 484.2,544 494.2,572.7 507.4,581.6 538.4,624.7 598.1,620.3 640.2,570.5 664.5,563.9 668.9,548.4 642.4,535.1 666.7,517.4 646.8,499.7 624.7,493.1 600.4,496.4 590.4,506.4 590.4,540.7 567.2,541.8" fill="none" stroke="#00ff00" stroke-width="1"/><path d="M667 516.5 H624.7 V557" fill="none" stroke="#00ff00" stroke-width="3"/><path d="M660 510 L667 516.5 L660 523" fill="none" stroke="#00ff00" stroke-width="3"/><path d="M618.5 551 L624.7 558 L631 551" fill="none" stroke="#00ff00" stroke-width="3"/><path d="M674 509 L681 516 M681 509 L674 516" stroke="#00e8e8" stroke-width="1"/><path d="M621 564 L624.7 568 L628.4 564 M624.7 568 V572" fill="none" stroke="#00e8e8" stroke-width="1"/></svg>
<svg class="r" style="left:1002px;top:218px" width="903" height="451" viewBox="1002 218 903 451"><defs><pattern id="thvm" width="4" height="4" patternUnits="userSpaceOnUse"><rect width="4" height="4" fill="#262626"/><rect y="0" width="4" height="1.2" fill="#4a4a4a"/></pattern><pattern id="thhm" width="4" height="4" patternUnits="userSpaceOnUse"><rect width="4" height="4" fill="#262626"/><rect x="0" width="1.2" height="4" fill="#4a4a4a"/></pattern><radialGradient id="ringm" cx="0.5" cy="0.5" r="0.5"><stop offset="0.55" stop-color="#2e2e2e"/><stop offset="0.8" stop-color="#3a3a3a"/><stop offset="1" stop-color="#262626"/></radialGradient><radialGradient id="nutgm" cx="0.5" cy="0.5" r="0.5"><stop offset="0.5" stop-color="#666"/><stop offset="1" stop-color="#5a5a5a"/></radialGradient></defs><rect x="1002" y="218" width="903" height="451" fill="#fff"/><rect x="1036" y="286" width="66" height="24" rx="0" fill="url(#thhm)" stroke="#00ff00" stroke-width="1"/><polygon points="1125.3,274.1 1110.0,281.0 1110.0,318.0 1125.3,326.9" fill="#2c2c2c"/><rect x="1101" y="281" width="10" height="37" rx="0" fill="#2b2b2b" stroke="#00ff00" stroke-width="1"/><path d="M1116.0 300.5 A42.5 42.5 0 1 0 1201.0 300.5 A42.5 42.5 0 1 0 1116.0 300.5 Z M1135.0 300.5 A23.5 23.5 0 1 1 1182.0 300.5 A23.5 23.5 0 1 1 1135.0 300.5 Z" fill="url(#ringm)" fill-rule="evenodd" stroke="#00ff00" stroke-width="1"/><polygon points="1245,270 1266,231 1311,231 1331,271 1310,309 1267,309" fill="url(#nutgm)" stroke="#00ff00" stroke-width="1"/><circle cx="1288" cy="265" r="25" fill="#1e1e1e"/><circle cx="1288" cy="267" r="22" fill="#fff" stroke="#00ff00" stroke-width="1"/><rect x="1386" y="294" width="39" height="115" rx="3" fill="url(#thvm)" stroke="#00ff00" stroke-width="1"/><rect x="1374" y="266" width="67" height="28" rx="2" fill="#353535" stroke="#00ff00" stroke-width="1"/><rect x="1395" y="274" width="33" height="18" rx="0" fill="#bdbdbd"/><rect x="1101" y="391" width="115" height="38" rx="3" fill="url(#thhm)"/><rect x="1072" y="376" width="29" height="68" rx="2" fill="#353535"/><rect x="1080" y="388" width="21" height="34" rx="0" fill="#bdbdbd"/><rect x="1280" y="424" width="25" height="67" rx="0" fill="url(#thvm)"/><polygon points="1266.8,405.5 1274.0,416.0 1312.0,416.0 1320.2,405.5" fill="#2c2c2c"/><rect x="1274" y="415" width="38" height="10" rx="0" fill="#2b2b2b"/><path d="M1250.5 372 A43 43 0 1 0 1336.5 372 A43 43 0 1 0 1250.5 372 Z M1269.5 372 A24 24 0 1 1 1317.5 372 A24 24 0 1 1 1269.5 372 Z" fill="url(#ringm)" fill-rule="evenodd"/><path d="M1513 299 A50 50 0 1 0 1613 299 A50 50 0 1 0 1513 299 Z M1535.5 299 A27.5 27.5 0 1 1 1590.5 299 A27.5 27.5 0 1 1 1535.5 299 Z" fill="#5f5f5f" fill-rule="evenodd" stroke="#00ff00" stroke-width="1"/><rect x="1726" y="278" width="66" height="23" rx="0" fill="url(#thhm)"/><polygon points="1701.8,262.0 1711.0,270.0 1711.0,308.0 1701.8,314.0" fill="#2c2c2c"/><rect x="1710" y="270" width="16" height="38" rx="0" fill="#2b2b2b"/><path d="M1627 288 A42 42 0 1 0 1711 288 A42 42 0 1 0 1627 288 Z M1645 288 A24 24 0 1 1 1693 288 A24 24 0 1 1 1645 288 Z" fill="url(#ringm)" fill-rule="evenodd"/><rect x="1481" y="340" width="24" height="66" rx="0" fill="url(#thvm)"/><polygon points="1466.2,430.4 1474.0,416.0 1511.0,416.0 1518.8,430.4" fill="#2c2c2c"/><rect x="1474" y="405" width="37" height="12" rx="0" fill="#2b2b2b"/><path d="M1450.0 463.5 A42.5 42.5 0 1 0 1535.0 463.5 A42.5 42.5 0 1 0 1450.0 463.5 Z M1469.5 463.5 A23 23 0 1 1 1515.5 463.5 A23 23 0 1 1 1469.5 463.5 Z" fill="url(#ringm)" fill-rule="evenodd"/><path d="M1606 397.5 A50 50 0 1 0 1706 397.5 A50 50 0 1 0 1606 397.5 Z M1629 397.5 A27 27 0 1 1 1683 397.5 A27 27 0 1 1 1629 397.5 Z" fill="#5f5f5f" fill-rule="evenodd" stroke="#00ff00" stroke-width="1"/><rect x="1731" y="367" width="115" height="39" rx="3" fill="url(#thhm)"/><rect x="1846" y="355" width="28" height="65" rx="2" fill="#353535"/><rect x="1846" y="376" width="20" height="34" rx="0" fill="#bdbdbd"/><polygon points="1037.5,506 1059,469 1101,469 1122.5,507.5 1105,546 1065,546" fill="url(#nutgm)" stroke="#00ff00" stroke-width="1"/><circle cx="1080" cy="504" r="25" fill="#1e1e1e"/><circle cx="1080" cy="506" r="22" fill="#fff" stroke="#00ff00" stroke-width="1"/><rect x="1135" y="530" width="115" height="39" rx="3" fill="url(#thhm)"/><rect x="1250" y="517" width="29" height="68" rx="2" fill="#353535"/><rect x="1250" y="537" width="22" height="33" rx="0" fill="#bdbdbd"/><polygon points="1329,470 1350,430 1395,430 1415,470 1395,510 1352,510" fill="url(#nutgm)" stroke="#00ff00" stroke-width="1"/><circle cx="1371" cy="466.5" r="25" fill="#1e1e1e"/><circle cx="1371" cy="468.5" r="22" fill="#fff" stroke="#00ff00" stroke-width="1"/><path d="M1292 570 A50 50 0 1 0 1392 570 A50 50 0 1 0 1292 570 Z M1315 570 A27 27 0 1 1 1369 570 A27 27 0 1 1 1315 570 Z" fill="#5f5f5f" fill-rule="evenodd" stroke="#00ff00" stroke-width="1"/><rect x="1439" y="526" width="115" height="39" rx="3" fill="url(#thhm)"/><rect x="1411" y="511" width="28" height="68" rx="2" fill="#353535"/><rect x="1418" y="525" width="21" height="35" rx="0" fill="#bdbdbd"/><rect x="1601" y="554" width="25" height="66" rx="0" fill="url(#thvm)"/><polygon points="1588.7,531.6 1596.0,546.0 1634.0,546.0 1641.3,531.6" fill="#2c2c2c"/><rect x="1596" y="545" width="38" height="10" rx="0" fill="#2b2b2b"/><path d="M1572.5 498.5 A42.5 42.5 0 1 0 1657.5 498.5 A42.5 42.5 0 1 0 1572.5 498.5 Z M1591.5 498.5 A23.5 23.5 0 1 1 1638.5 498.5 A23.5 23.5 0 1 1 1591.5 498.5 Z" fill="url(#ringm)" fill-rule="evenodd"/><rect x="1686" y="472" width="39" height="114" rx="3" fill="url(#thvm)"/><rect x="1671" y="586" width="68" height="29" rx="2" fill="#353535"/><rect x="1684" y="588" width="33" height="20" rx="0" fill="#bdbdbd"/><polygon points="1765,526 1785,487.5 1832.5,487.5 1851,529 1832,566 1787.5,566" fill="url(#nutgm)" stroke="#00ff00" stroke-width="1"/><circle cx="1807.5" cy="523" r="26" fill="#1e1e1e"/><circle cx="1807.5" cy="525" r="23" fill="#fff" stroke="#00ff00" stroke-width="1"/><path d="M1282 612 V631 M1403 628 L1401 630 M1597 440 V458 M1718 455 L1716 457" stroke="#ff0000" stroke-width="1.2"/></svg>
<div class="r" style="left:1px;top:948px;width:329px;height:64px;background:#808080;"></div>
<svg class="r" style="left:1px;top:948px;" width="329" height="64" viewBox="0 0 329 64"><rect x="5" y="5" width="4" height="3" fill="#fff"/><rect x="5" y="56" width="4" height="3" fill="#fff"/><rect x="15" y="5" width="4" height="3" fill="#fff"/><rect x="15" y="56" width="4" height="3" fill="#fff"/><rect x="25" y="5" width="4" height="3" fill="#fff"/><rect x="25" y="56" width="4" height="3" fill="#fff"/><rect x="35" y="5" width="4" height="3" fill="#fff"/><rect x="35" y="56" width="4" height="3" fill="#fff"/><rect x="45" y="5" width="4" height="3" fill="#fff"/><rect x="45" y="56" width="4" height="3" fill="#fff"/><rect x="55" y="5" width="4" height="3" fill="#fff"/><rect x="55" y="56" width="4" height="3" fill="#fff"/><rect x="65" y="5" width="4" height="3" fill="#fff"/><rect x="65" y="56" width="4" height="3" fill="#fff"/><rect x="75" y="5" width="4" height="3" fill="#fff"/><rect x="75" y="56" width="4" height="3" fill="#fff"/><rect x="85" y="5" width="4" height="3" fill="#fff"/><rect x="85" y="56" width="4" height="3" fill="#fff"/><rect x="95" y="5" width="4" height="3" fill="#fff"/><rect x="95" y="56" width="4" height="3" fill="#fff"/><rect x="105" y="5" width="4" height="3" fill="#fff"/><rect x="105" y="56" width="4" height="3" fill="#fff"/><rect x="115" y="5" width="4" height="3" fill="#fff"/><rect x="115" y="56" width="4" height="3" fill="#fff"/><rect x="125" y="5" width="4" height="3" fill="#fff"/><rect x="125" y="56" width="4" height="3" fill="#fff"/><rect x="135" y="5" width="4" height="3" fill="#fff"/><rect x="135" y="56" width="4" height="3" fill="#fff"/><rect x="145" y="5" width="4" height="3" fill="#fff"/><rect x="145" y="56" width="4" height="3" fill="#fff"/><rect x="155" y="5" width="4" height="3" fill="#fff"/><rect x="155" y="56" width="4" height="3" fill="#fff"/><rect x="165" y="5" width="4" height="3" fill="#fff"/><rect x="165" y="56" width="4" height="3" fill="#fff"/><rect x="175" y="5" width="4" height="3" fill="#fff"/><rect x="175" y="56" width="4" height="3" fill="#fff"/><rect x="185" y="5" width="4" height="3" fill="#fff"/><rect x="185" y="56" width="4" height="3" fill="#fff"/><rect x="195" y="5" width="4" height="3" fill="#fff"/><rect x="195" y="56" width="4" height="3" fill="#fff"/><rect x="205" y="5" width="4" height="3" fill="#fff"/><rect x="205" y="56" width="4" height="3" fill="#fff"/><rect x="215" y="5" width="4" height="3" fill="#fff"/><rect x="215" y="56" width="4" height="3" fill="#fff"/><rect x="225" y="5" width="4" height="3" fill="#fff"/><rect x="225" y="56" width="4" height="3" fill="#fff"/><rect x="235" y="5" width="4" height="3" fill="#fff"/><rect x="235" y="56" width="4" height="3" fill="#fff"/><rect x="245" y="5" width="4" height="3" fill="#fff"/><rect x="245" y="56" width="4" height="3" fill="#fff"/><rect x="255" y="5" width="4" height="3" fill="#fff"/><rect x="255" y="56" width="4" height="3" fill="#fff"/><rect x="265" y="5" width="4" height="3" fill="#fff"/><rect x="265" y="56" width="4" height="3" fill="#fff"/><rect x="275" y="5" width="4" height="3" fill="#fff"/><rect x="275" y="56" width="4" height="3" fill="#fff"/><rect x="285" y="5" width="4" height="3" fill="#fff"/><rect x="285" y="56" width="4" height="3" fill="#fff"/><rect x="295" y="5" width="4" height="3" fill="#fff"/><rect x="295" y="56" width="4" height="3" fill="#fff"/><rect x="305" y="5" width="4" height="3" fill="#fff"/><rect x="305" y="56" width="4" height="3" fill="#fff"/><rect x="315" y="5" width="4" height="3" fill="#fff"/><rect x="315" y="56" width="4" height="3" fill="#fff"/></svg>
<div class="r" style="left:6px;top:958px;width:44px;height:44px;background:#3d8f3d;"></div>
<svg class="r" style="left:11px;top:963px" width="34" height="34" viewBox="1 391 411 299" preserveAspectRatio="none"><defs><linearGradient id="bgt11" x1="0" y1="0" x2="0" y2="1"><stop offset="0" stop-color="#3a2414"/><stop offset="1" stop-color="#1f130b"/></linearGradient><linearGradient id="bandt11" x1="0" y1="0" x2="0" y2="1"><stop offset="0" stop-color="#dcdfbc"/><stop offset="0.3" stop-color="#d2d5b0"/><stop offset="0.8" stop-color="#c6c8a2"/><stop offset="0.86" stop-color="#a9aa88"/><stop offset="1" stop-color="#9c9c7e"/></linearGradient></defs><rect x="1" y="391" width="411" height="299" fill="url(#bgt11)"/><rect x="30" y="417" width="347" height="231" fill="#241810" stroke="#6a5a40" stroke-width="1.5"/><path d="M31 418.5 H377" stroke="#b8a888" stroke-width="2"/><path d="M40 647 H376" stroke="#8a7a60" stroke-width="1.5"/><linearGradient id="tgt110" x1="0" y1="0" x2="0" y2="1"><stop offset="0" stop-color="#1b4a72"/><stop offset="1" stop-color="#1c4870"/></linearGradient><rect x="36" y="431" width="59" height="74" fill="url(#tgt110)"/><rect x="36" y="505" width="59" height="56" fill="url(#bandt11)"/><rect x="36" y="561" width="59" height="76" fill="#254c6a"/><linearGradient id="tgt111" x1="0" y1="0" x2="0" y2="1"><stop offset="0" stop-color="#1a4a26"/><stop offset="1" stop-color="#1c4a28"/></linearGradient><rect x="105" y="429" width="60" height="76" fill="url(#tgt111)"/><rect x="105" y="505" width="60" height="56" fill="url(#bandt11)"/><rect x="105" y="561" width="60" height="74" fill="#244a2c"/><linearGradient id="tgt112" x1="0" y1="0" x2="0" y2="1"><stop offset="0" stop-color="#d6c636"/><stop offset="1" stop-color="#ccbc34"/></linearGradient><rect x="175" y="427" width="59" height="78" fill="url(#tgt112)"/><rect x="175" y="505" width="59" height="56" fill="url(#bandt11)"/><rect x="175" y="561" width="59" height="74" fill="#bdb036"/><linearGradient id="tgt113" x1="0" y1="0" x2="0" y2="1"><stop offset="0" stop-color="#c4501c"/><stop offset="1" stop-color="#a83c16"/></linearGradient><rect x="244" y="427" width="58" height="78" fill="url(#tgt113)"/><rect x="244" y="505" width="58" height="56" fill="url(#bandt11)"/><rect x="244" y="561" width="58" height="73" fill="#a24a28"/><linearGradient id="tgt114" x1="0" y1="0" x2="0" y2="1"><stop offset="0" stop-color="#a02416"/><stop offset="1" stop-color="#7c1610"/></linearGradient><rect x="315" y="429" width="58" height="76" fill="url(#tgt114)"/><rect x="315" y="505" width="58" height="56" fill="url(#bandt11)"/><rect x="315" y="561" width="58" height="74" fill="#7e2c20"/><path d="M95 520 H376 M36 555.5 H376" stroke="#8a7a5a" stroke-width="0.8" opacity="0.7"/></svg>
<div class="r" style="left:330px;top:948px;width:100px;height:64px;background:#fcfcfc;"></div>
<div class="r" style="left:332px;top:949px;width:47px;height:29px;background:#efefef;border:1px solid #e6e6e6;border-radius:4px;box-sizing:border-box"></div>
<div class="r" style="left:381px;top:949px;width:47px;height:29px;background:#efefef;border:1px solid #e6e6e6;border-radius:4px;box-sizing:border-box"></div>
<div class="r" style="left:332px;top:981px;width:47px;height:29px;background:#efefef;border:1px solid #e6e6e6;border-radius:4px;box-sizing:border-box"></div>
<div class="r" style="left:381px;top:981px;width:47px;height:29px;background:#efefef;border:1px solid #d8d8d8;border-radius:4px;box-sizing:border-box"></div>
<svg class="r" style="left:351px;top:955.5px;" width="10" height="17" viewBox="0 0 10 17"><path d="M8.5 1.5 L2 8.5 L8.5 15.5" fill="none" stroke="#777" stroke-width="2.2"/></svg>
<svg class="r" style="left:399px;top:955.5px;" width="10" height="17" viewBox="0 0 10 17"><path d="M1.5 1.5 L8 8.5 L1.5 15.5" fill="none" stroke="#777" stroke-width="2.2"/></svg>
<svg class="r" style="left:348px;top:987px;" width="16" height="18" viewBox="0 0 16 18"><path d="M2.5 2 Q2 1 3.2 1.5 L13.5 7.8 Q14.5 8.5 13.5 9.2 L4 15.5 Q2.5 16.5 2.5 15 Z" fill="none" stroke="#888" stroke-width="1.2"/></svg>
<svg class="r" style="left:397px;top:988px;" width="14" height="17" viewBox="0 0 14 17"><path d="M4.5 2.5 V1 H9.5 V2.5" fill="none" stroke="#bbb" stroke-width="1"/><rect x="0.5" y="2.5" width="13" height="2.5" fill="#bbb"/><rect x="1.5" y="6" width="11" height="10" fill="#c4c4c4"/><path d="M4 7 V15 M7 7 V15 M10 7 V15" stroke="#a6a6a6" stroke-width="1.2"/></svg>
<div class="r" style="left:436px;top:948px;width:460px;height:64px;background:#808080;"></div>
<svg class="r" style="left:436px;top:948px;" width="460" height="64" viewBox="0 0 460 64"><rect x="5" y="5" width="4" height="3" fill="#fff"/><rect x="5" y="56" width="4" height="3" fill="#fff"/><rect x="15" y="5" width="4" height="3" fill="#fff"/><rect x="15" y="56" width="4" height="3" fill="#fff"/><rect x="25" y="5" width="4" height="3" fill="#fff"/><rect x="25" y="56" width="4" height="3" fill="#fff"/><rect x="35" y="5" width="4" height="3" fill="#fff"/><rect x="35" y="56" width="4" height="3" fill="#fff"/><rect x="45" y="5" width="4" height="3" fill="#fff"/><rect x="45" y="56" width="4" height="3" fill="#fff"/><rect x="55" y="5" width="4" height="3" fill="#fff"/><rect x="55" y="56" width="4" height="3" fill="#fff"/><rect x="65" y="5" width="4" height="3" fill="#fff"/><rect x="65" y="56" width="4" height="3" fill="#fff"/><rect x="75" y="5" width="4" height="3" fill="#fff"/><rect x="75" y="56" width="4" height="3" fill="#fff"/><rect x="85" y="5" width="4" height="3" fill="#fff"/><rect x="85" y="56" width="4" height="3" fill="#fff"/><rect x="95" y="5" width="4" height="3" fill="#fff"/><rect x="95" y="56" width="4" height="3" fill="#fff"/><rect x="105" y="5" width="4" height="3" fill="#fff"/><rect x="105" y="56" width="4" height="3" fill="#fff"/><rect x="115" y="5" width="4" height="3" fill="#fff"/><rect x="115" y="56" width="4" height="3" fill="#fff"/><rect x="125" y="5" width="4" height="3" fill="#fff"/><rect x="125" y="56" width="4" height="3" fill="#fff"/><rect x="135" y="5" width="4" height="3" fill="#fff"/><rect x="135" y="56" width="4" height="3" fill="#fff"/><rect x="145" y="5" width="4" height="3" fill="#fff"/><rect x="145" y="56" width="4" height="3" fill="#fff"/><rect x="155" y="5" width="4" height="3" fill="#fff"/><rect x="155" y="56" width="4" height="3" fill="#fff"/><rect x="165" y="5" width="4" height="3" fill="#fff"/><rect x="165" y="56" width="4" height="3" fill="#fff"/><rect x="175" y="5" width="4" height="3" fill="#fff"/><rect x="175" y="56" width="4" height="3" fill="#fff"/><rect x="185" y="5" width="4" height="3" fill="#fff"/><rect x="185" y="56" width="4" height="3" fill="#fff"/><rect x="195" y="5" width="4" height="3" fill="#fff"/><rect x="195" y="56" width="4" height="3" fill="#fff"/><rect x="205" y="5" width="4" height="3" fill="#fff"/><rect x="205" y="56" width="4" height="3" fill="#fff"/><rect x="215" y="5" width="4" height="3" fill="#fff"/><rect x="215" y="56" width="4" height="3" fill="#fff"/><rect x="225" y="5" width="4" height="3" fill="#fff"/><rect x="225" y="56" width="4" height="3" fill="#fff"/><rect x="235" y="5" width="4" height="3" fill="#fff"/><rect x="235" y="56" width="4" height="3" fill="#fff"/><rect x="245" y="5" width="4" height="3" fill="#fff"/><rect x="245" y="56" width="4" height="3" fill="#fff"/><rect x="255" y="5" width="4" height="3" fill="#fff"/><rect x="255" y="56" width="4" height="3" fill="#fff"/><rect x="265" y="5" width="4" height="3" fill="#fff"/><rect x="265" y="56" width="4" height="3" fill="#fff"/><rect x="275" y="5" width="4" height="3" fill="#fff"/><rect x="275" y="56" width="4" height="3" fill="#fff"/><rect x="285" y="5" width="4" height="3" fill="#fff"/><rect x="285" y="56" width="4" height="3" fill="#fff"/><rect x="295" y="5" width="4" height="3" fill="#fff"/><rect x="295" y="56" width="4" height="3" fill="#fff"/><rect x="305" y="5" width="4" height="3" fill="#fff"/><rect x="305" y="56" width="4" height="3" fill="#fff"/><rect x="315" y="5" width="4" height="3" fill="#fff"/><rect x="315" y="56" width="4" height="3" fill="#fff"/><rect x="325" y="5" width="4" height="3" fill="#fff"/><rect x="325" y="56" width="4" height="3" fill="#fff"/><rect x="335" y="5" width="4" height="3" fill="#fff"/><rect x="335" y="56" width="4" height="3" fill="#fff"/><rect x="345" y="5" width="4" height="3" fill="#fff"/><rect x="345" y="56" width="4" height="3" fill="#fff"/><rect x="355" y="5" width="4" height="3" fill="#fff"/><rect x="355" y="56" width="4" height="3" fill="#fff"/><rect x="365" y="5" width="4" height="3" fill="#fff"/><rect x="365" y="56" width="4" height="3" fill="#fff"/><rect x="375" y="5" width="4" height="3" fill="#fff"/><rect x="375" y="56" width="4" height="3" fill="#fff"/><rect x="385" y="5" width="4" height="3" fill="#fff"/><rect x="385" y="56" width="4" height="3" fill="#fff"/><rect x="395" y="5" width="4" height="3" fill="#fff"/><rect x="395" y="56" width="4" height="3" fill="#fff"/><rect x="405" y="5" width="4" height="3" fill="#fff"/><rect x="405" y="56" width="4" height="3" fill="#fff"/><rect x="415" y="5" width="4" height="3" fill="#fff"/><rect x="415" y="56" width="4" height="3" fill="#fff"/><rect x="425" y="5" width="4" height="3" fill="#fff"/><rect x="425" y="56" width="4" height="3" fill="#fff"/><rect x="435" y="5" width="4" height="3" fill="#fff"/><rect x="435" y="56" width="4" height="3" fill="#fff"/><rect x="445" y="5" width="4" height="3" fill="#fff"/><rect x="445" y="56" width="4" height="3" fill="#fff"/></svg>
<div class="r" style="left:441px;top:958px;width:44px;height:44px;background:#3d8f3d;"></div>
<svg class="r" style="left:446px;top:963px" width="34" height="34" viewBox="436 453 263 197" preserveAspectRatio="none"><rect x="436" y="453" width="263" height="197" fill="#101010"/><defs><clipPath id="pct446"><polygon points="500.8,507.5 484.2,530.7 484.2,544 494.2,572.7 507.4,581.6 538.4,624.7 598.1,620.3 640.2,570.5 664.5,563.9 668.9,548.4 642.4,535.1 666.7,517.4 646.8,499.7 624.7,493.1 600.4,496.4 590.4,506.4 590.4,540.7 567.2,541.8"/></clipPath><radialGradient id="pgt446" cx="0.45" cy="0.5" r="0.6"><stop offset="0" stop-color="#e6e6e6"/><stop offset="1" stop-color="#d2d2d2"/></radialGradient></defs><polygon points="500.8,507.5 484.2,530.7 484.2,544 494.2,572.7 507.4,581.6 538.4,624.7 598.1,620.3 640.2,570.5 664.5,563.9 668.9,548.4 642.4,535.1 666.7,517.4 646.8,499.7 624.7,493.1 600.4,496.4 590.4,506.4 590.4,540.7 567.2,541.8" fill="url(#pgt446)"/></svg>
<div class="r" style="left:490px;top:958px;width:44px;height:44px;background:#3d8f3d;"></div>
<svg class="r" style="left:495px;top:963px" width="34" height="34" viewBox="436 453 263 197" preserveAspectRatio="none"><rect x="436" y="453" width="263" height="197" fill="#101010"/><defs><clipPath id="pct495"><polygon points="500.8,507.5 484.2,530.7 484.2,544 494.2,572.7 507.4,581.6 538.4,624.7 598.1,620.3 640.2,570.5 664.5,563.9 668.9,548.4 642.4,535.1 666.7,517.4 646.8,499.7 624.7,493.1 600.4,496.4 590.4,506.4 590.4,540.7 567.2,541.8"/></clipPath><radialGradient id="pgt495" cx="0.45" cy="0.5" r="0.6"><stop offset="0" stop-color="#e6e6e6"/><stop offset="1" stop-color="#d2d2d2"/></radialGradient></defs><polygon points="500.8,507.5 484.2,530.7 484.2,544 494.2,572.7 507.4,581.6 538.4,624.7 598.1,620.3 640.2,570.5 664.5,563.9 668.9,548.4 642.4,535.1 666.7,517.4 646.8,499.7 624.7,493.1 600.4,496.4 590.4,506.4 590.4,540.7 567.2,541.8" fill="url(#pgt495)"/></svg>
<div class="r" style="left:896px;top:948px;width:100px;height:64px;background:#fcfcfc;"></div>
<div class="r" style="left:898px;top:949px;width:47px;height:29px;background:#efefef;border:1px solid #e6e6e6;border-radius:4px;box-sizing:border-box"></div>
<div class="r" style="left:947px;top:949px;width:47px;height:29px;background:#efefef;border:1px solid #e6e6e6;border-radius:4px;box-sizing:border-box"></div>
<div class="r" style="left:898px;top:981px;width:47px;height:29px;background:#efefef;border:1px solid #e6e6e6;border-radius:4px;box-sizing:border-box"></div>
<div class="r" style="left:947px;top:981px;width:47px;height:29px;background:#efefef;border:1px solid #d8d8d8;border-radius:4px;box-sizing:border-box"></div>
<svg class="r" style="left:917px;top:955.5px;" width="10" height="17" viewBox="0 0 10 17"><path d="M8.5 1.5 L2 8.5 L8.5 15.5" fill="none" stroke="#777" stroke-width="2.2"/></svg>
<svg class="r" style="left:965px;top:955.5px;" width="10" height="17" viewBox="0 0 10 17"><path d="M1.5 1.5 L8 8.5 L1.5 15.5" fill="none" stroke="#777" stroke-width="2.2"/></svg>
<svg class="r" style="left:914px;top:987px;" width="16" height="18" viewBox="0 0 16 18"><path d="M2.5 2 Q2 1 3.2 1.5 L13.5 7.8 Q14.5 8.5 13.5 9.2 L4 15.5 Q2.5 16.5 2.5 15 Z" fill="none" stroke="#888" stroke-width="1.2"/></svg>
<svg class="r" style="left:963px;top:988px;" width="14" height="17" viewBox="0 0 14 17"><path d="M4.5 2.5 V1 H9.5 V2.5" fill="none" stroke="#bbb" stroke-width="1"/><rect x="0.5" y="2.5" width="13" height="2.5" fill="#bbb"/><rect x="1.5" y="6" width="11" height="10" fill="#c4c4c4"/><path d="M4 7 V15 M7 7 V15 M10 7 V15" stroke="#a6a6a6" stroke-width="1.2"/></svg>
<div class="r" style="left:1002px;top:948px;width:820px;height:64px;background:#808080;"></div>
<svg class="r" style="left:1002px;top:948px;" width="820" height="64" viewBox="0 0 820 64"><rect x="5" y="5" width="4" height="3" fill="#fff"/><rect x="5" y="56" width="4" height="3" fill="#fff"/><rect x="15" y="5" width="4" height="3" fill="#fff"/><rect x="15" y="56" width="4" height="3" fill="#fff"/><rect x="25" y="5" width="4" height="3" fill="#fff"/><rect x="25" y="56" width="4" height="3" fill="#fff"/><rect x="35" y="5" width="4" height="3" fill="#fff"/><rect x="35" y="56" width="4" height="3" fill="#fff"/><rect x="45" y="5" width="4" height="3" fill="#fff"/><rect x="45" y="56" width="4" height="3" fill="#fff"/><rect x="55" y="5" width="4" height="3" fill="#fff"/><rect x="55" y="56" width="4" height="3" fill="#fff"/><rect x="65" y="5" width="4" height="3" fill="#fff"/><rect x="65" y="56" width="4" height="3" fill="#fff"/><rect x="75" y="5" width="4" height="3" fill="#fff"/><rect x="75" y="56" width="4" height="3" fill="#fff"/><rect x="85" y="5" width="4" height="3" fill="#fff"/><rect x="85" y="56" width="4" height="3" fill="#fff"/><rect x="95" y="5" width="4" height="3" fill="#fff"/><rect x="95" y="56" width="4" height="3" fill="#fff"/><rect x="105" y="5" width="4" height="3" fill="#fff"/><rect x="105" y="56" width="4" height="3" fill="#fff"/><rect x="115" y="5" width="4" height="3" fill="#fff"/><rect x="115" y="56" width="4" height="3" fill="#fff"/><rect x="125" y="5" width="4" height="3" fill="#fff"/><rect x="125" y="56" width="4" height="3" fill="#fff"/><rect x="135" y="5" width="4" height="3" fill="#fff"/><rect x="135" y="56" width="4" height="3" fill="#fff"/><rect x="145" y="5" width="4" height="3" fill="#fff"/><rect x="145" y="56" width="4" height="3" fill="#fff"/><rect x="155" y="5" width="4" height="3" fill="#fff"/><rect x="155" y="56" width="4" height="3" fill="#fff"/><rect x="165" y="5" width="4" height="3" fill="#fff"/><rect x="165" y="56" width="4" height="3" fill="#fff"/><rect x="175" y="5" width="4" height="3" fill="#fff"/><rect x="175" y="56" width="4" height="3" fill="#fff"/><rect x="185" y="5" width="4" height="3" fill="#fff"/><rect x="185" y="56" width="4" height="3" fill="#fff"/><rect x="195" y="5" width="4" height="3" fill="#fff"/><rect x="195" y="56" width="4" height="3" fill="#fff"/><rect x="205" y="5" width="4" height="3" fill="#fff"/><rect x="205" y="56" width="4" height="3" fill="#fff"/><rect x="215" y="5" width="4" height="3" fill="#fff"/><rect x="215" y="56" width="4" height="3" fill="#fff"/><rect x="225" y="5" width="4" height="3" fill="#fff"/><rect x="225" y="56" width="4" height="3" fill="#fff"/><rect x="235" y="5" width="4" height="3" fill="#fff"/><rect x="235" y="56" width="4" height="3" fill="#fff"/><rect x="245" y="5" width="4" height="3" fill="#fff"/><rect x="245" y="56" width="4" height="3" fill="#fff"/><rect x="255" y="5" width="4" height="3" fill="#fff"/><rect x="255" y="56" width="4" height="3" fill="#fff"/><rect x="265" y="5" width="4" height="3" fill="#fff"/><rect x="265" y="56" width="4" height="3" fill="#fff"/><rect x="275" y="5" width="4" height="3" fill="#fff"/><rect x="275" y="56" width="4" height="3" fill="#fff"/><rect x="285" y="5" width="4" height="3" fill="#fff"/><rect x="285" y="56" width="4" height="3" fill="#fff"/><rect x="295" y="5" width="4" height="3" fill="#fff"/><rect x="295" y="56" width="4" height="3" fill="#fff"/><rect x="305" y="5" width="4" height="3" fill="#fff"/><rect x="305" y="56" width="4" height="3" fill="#fff"/><rect x="315" y="5" width="4" height="3" fill="#fff"/><rect x="315" y="56" width="4" height="3" fill="#fff"/><rect x="325" y="5" width="4" height="3" fill="#fff"/><rect x="325" y="56" width="4" height="3" fill="#fff"/><rect x="335" y="5" width="4" height="3" fill="#fff"/><rect x="335" y="56" width="4" height="3" fill="#fff"/><rect x="345" y="5" width="4" height="3" fill="#fff"/><rect x="345" y="56" width="4" height="3" fill="#fff"/><rect x="355" y="5" width="4" height="3" fill="#fff"/><rect x="355" y="56" width="4" height="3" fill="#fff"/><rect x="365" y="5" width="4" height="3" fill="#fff"/><rect x="365" y="56" width="4" height="3" fill="#fff"/><rect x="375" y="5" width="4" height="3" fill="#fff"/><rect x="375" y="56" width="4" height="3" fill="#fff"/><rect x="385" y="5" width="4" height="3" fill="#fff"/><rect x="385" y="56" width="4" height="3" fill="#fff"/><rect x="395" y="5" width="4" height="3" fill="#fff"/><rect x="395" y="56" width="4" height="3" fill="#fff"/><rect x="405" y="5" width="4" height="3" fill="#fff"/><rect x="405" y="56" width="4" height="3" fill="#fff"/><rect x="415" y="5" width="4" height="3" fill="#fff"/><rect x="415" y="56" width="4" height="3" fill="#fff"/><rect x="425" y="5" width="4" height="3" fill="#fff"/><rect x="425" y="56" width="4" height="3" fill="#fff"/><rect x="435" y="5" width="4" height="3" fill="#fff"/><rect x="435" y="56" width="4" height="3" fill="#fff"/><rect x="445" y="5" width="4" height="3" fill="#fff"/><rect x="445" y="56" width="4" height="3" fill="#fff"/><rect x="455" y="5" width="4" height="3" fill="#fff"/><rect x="455" y="56" width="4" height="3" fill="#fff"/><rect x="465" y="5" width="4" height="3" fill="#fff"/><rect x="465" y="56" width="4" height="3" fill="#fff"/><rect x="475" y="5" width="4" height="3" fill="#fff"/><rect x="475" y="56" width="4" height="3" fill="#fff"/><rect x="485" y="5" width="4" height="3" fill="#fff"/><rect x="485" y="56" width="4" height="3" fill="#fff"/><rect x="495" y="5" width="4" height="3" fill="#fff"/><rect x="495" y="56" width="4" height="3" fill="#fff"/><rect x="505" y="5" width="4" height="3" fill="#fff"/><rect x="505" y="56" width="4" height="3" fill="#fff"/><rect x="515" y="5" width="4" height="3" fill="#fff"/><rect x="515" y="56" width="4" height="3" fill="#fff"/><rect x="525" y="5" width="4" height="3" fill="#fff"/><rect x="525" y="56" width="4" height="3" fill="#fff"/><rect x="535" y="5" width="4" height="3" fill="#fff"/><rect x="535" y="56" width="4" height="3" fill="#fff"/><rect x="545" y="5" width="4" height="3" fill="#fff"/><rect x="545" y="56" width="4" height="3" fill="#fff"/><rect x="555" y="5" width="4" height="3" fill="#fff"/><rect x="555" y="56" width="4" height="3" fill="#fff"/><rect x="565" y="5" width="4" height="3" fill="#fff"/><rect x="565" y="56" width="4" height="3" fill="#fff"/><rect x="575" y="5" width="4" height="3" fill="#fff"/><rect x="575" y="56" width="4" height="3" fill="#fff"/><rect x="585" y="5" width="4" height="3" fill="#fff"/><rect x="585" y="56" width="4" height="3" fill="#fff"/><rect x="595" y="5" width="4" height="3" fill="#fff"/><rect x="595" y="56" width="4" height="3" fill="#fff"/><rect x="605" y="5" width="4" height="3" fill="#fff"/><rect x="605" y="56" width="4" height="3" fill="#fff"/><rect x="615" y="5" width="4" height="3" fill="#fff"/><rect x="615" y="56" width="4" height="3" fill="#fff"/><rect x="625" y="5" width="4" height="3" fill="#fff"/><rect x="625" y="56" width="4" height="3" fill="#fff"/><rect x="635" y="5" width="4" height="3" fill="#fff"/><rect x="635" y="56" width="4" height="3" fill="#fff"/><rect x="645" y="5" width="4" height="3" fill="#fff"/><rect x="645" y="56" width="4" height="3" fill="#fff"/><rect x="655" y="5" width="4" height="3" fill="#fff"/><rect x="655" y="56" width="4" height="3" fill="#fff"/><rect x="665" y="5" width="4" height="3" fill="#fff"/><rect x="665" y="56" width="4" height="3" fill="#fff"/><rect x="675" y="5" width="4" height="3" fill="#fff"/><rect x="675" y="56" width="4" height="3" fill="#fff"/><rect x="685" y="5" width="4" height="3" fill="#fff"/><rect x="685" y="56" width="4" height="3" fill="#fff"/><rect x="695" y="5" width="4" height="3" fill="#fff"/><rect x="695" y="56" width="4" height="3" fill="#fff"/><rect x="705" y="5" width="4" height="3" fill="#fff"/><rect x="705" y="56" width="4" height="3" fill="#fff"/><rect x="715" y="5" width="4" height="3" fill="#fff"/><rect x="715" y="56" width="4" height="3" fill="#fff"/><rect x="725" y="5" width="4" height="3" fill="#fff"/><rect x="725" y="56" width="4" height="3" fill="#fff"/><rect x="735" y="5" width="4" height="3" fill="#fff"/><rect x="735" y="56" width="4" height="3" fill="#fff"/><rect x="745" y="5" width="4" height="3" fill="#fff"/><rect x="745" y="56" width="4" height="3" fill="#fff"/><rect x="755" y="5" width="4" height="3" fill="#fff"/><rect x="755" y="56" width="4" height="3" fill="#fff"/><rect x="765" y="5" width="4" height="3" fill="#fff"/><rect x="765" y="56" width="4" height="3" fill="#fff"/><rect x="775" y="5" width="4" height="3" fill="#fff"/><rect x="775" y="56" width="4" height="3" fill="#fff"/><rect x="785" y="5" width="4" height="3" fill="#fff"/><rect x="785" y="56" width="4" height="3" fill="#fff"/><rect x="795" y="5" width="4" height="3" fill="#fff"/><rect x="795" y="56" width="4" height="3" fill="#fff"/><rect x="805" y="5" width="4" height="3" fill="#fff"/><rect x="805" y="56" width="4" height="3" fill="#fff"/></svg>
<div class="r" style="left:1007px;top:958px;width:44px;height:44px;background:#3d8f3d;"></div>
<svg class="r" style="left:1012px;top:963px" width="34" height="34" viewBox="1002 218 903 451" preserveAspectRatio="none"><defs><pattern id="thvt1012" width="4" height="4" patternUnits="userSpaceOnUse"><rect width="4" height="4" fill="#262626"/><rect y="0" width="4" height="1.2" fill="#4a4a4a"/></pattern><pattern id="thht1012" width="4" height="4" patternUnits="userSpaceOnUse"><rect width="4" height="4" fill="#262626"/><rect x="0" width="1.2" height="4" fill="#4a4a4a"/></pattern><radialGradient id="ringt1012" cx="0.5" cy="0.5" r="0.5"><stop offset="0.55" stop-color="#2e2e2e"/><stop offset="0.8" stop-color="#3a3a3a"/><stop offset="1" stop-color="#262626"/></radialGradient><radialGradient id="nutgt1012" cx="0.5" cy="0.5" r="0.5"><stop offset="0.5" stop-color="#666"/><stop offset="1" stop-color="#5a5a5a"/></radialGradient></defs><rect x="1002" y="218" width="903" height="451" fill="#fff"/><rect x="1036" y="286" width="66" height="24" rx="0" fill="#2b2b2b"/><polygon points="1125.3,274.1 1110.0,281.0 1110.0,318.0 1125.3,326.9" fill="#2c2c2c"/><rect x="1101" y="281" width="10" height="37" rx="0" fill="#2b2b2b"/><path d="M1116.0 300.5 A42.5 42.5 0 1 0 1201.0 300.5 A42.5 42.5 0 1 0 1116.0 300.5 Z M1135.0 300.5 A23.5 23.5 0 1 1 1182.0 300.5 A23.5 23.5 0 1 1 1135.0 300.5 Z" fill="url(#ringt1012)" fill-rule="evenodd"/><polygon points="1245,270 1266,231 1311,231 1331,271 1310,309 1267,309" fill="url(#nutgt1012)"/><circle cx="1288" cy="265" r="25" fill="#1e1e1e"/><circle cx="1288" cy="267" r="22" fill="#fff"/><rect x="1386" y="294" width="39" height="115" rx="3" fill="#2b2b2b"/><rect x="1374" y="266" width="67" height="28" rx="2" fill="#353535"/><rect x="1395" y="274" width="33" height="18" rx="0" fill="#bdbdbd"/><rect x="1101" y="391" width="115" height="38" rx="3" fill="#2b2b2b"/><rect x="1072" y="376" width="29" height="68" rx="2" fill="#353535"/><rect x="1080" y="388" width="21" height="34" rx="0" fill="#bdbdbd"/><rect x="1280" y="424" width="25" height="67" rx="0" fill="#2b2b2b"/><polygon points="1266.8,405.5 1274.0,416.0 1312.0,416.0 1320.2,405.5" fill="#2c2c2c"/><rect x="1274" y="415" width="38" height="10" rx="0" fill="#2b2b2b"/><path d="M1250.5 372 A43 43 0 1 0 1336.5 372 A43 43 0 1 0 1250.5 372 Z M1269.5 372 A24 24 0 1 1 1317.5 372 A24 24 0 1 1 1269.5 372 Z" fill="url(#ringt1012)" fill-rule="evenodd"/><path d="M1513 299 A50 50 0 1 0 1613 299 A50 50 0 1 0 1513 299 Z M1535.5 299 A27.5 27.5 0 1 1 1590.5 299 A27.5 27.5 0 1 1 1535.5 299 Z" fill="#5f5f5f" fill-rule="evenodd"/><rect x="1726" y="278" width="66" height="23" rx="0" fill="#2b2b2b"/><polygon points="1701.8,262.0 1711.0,270.0 1711.0,308.0 1701.8,314.0" fill="#2c2c2c"/><rect x="1710" y="270" width="16" height="38" rx="0" fill="#2b2b2b"/><path d="M1627 288 A42 42 0 1 0 1711 288 A42 42 0 1 0 1627 288 Z M1645 288 A24 24 0 1 1 1693 288 A24 24 0 1 1 1645 288 Z" fill="url(#ringt1012)" fill-rule="evenodd"/><rect x="1481" y="340" width="24" height="66" rx="0" fill="#2b2b2b"/><polygon points="1466.2,430.4 1474.0,416.0 1511.0,416.0 1518.8,430.4" fill="#2c2c2c"/><rect x="1474" y="405" width="37" height="12" rx="0" fill="#2b2b2b"/><path d="M1450.0 463.5 A42.5 42.5 0 1 0 1535.0 463.5 A42.5 42.5 0 1 0 1450.0 463.5 Z M1469.5 463.5 A23 23 0 1 1 1515.5 463.5 A23 23 0 1 1 1469.5 463.5 Z" fill="url(#ringt1012)" fill-rule="evenodd"/><path d="M1606 397.5 A50 50 0 1 0 1706 397.5 A50 50 0 1 0 1606 397.5 Z M1629 397.5 A27 27 0 1 1 1683 397.5 A27 27 0 1 1 1629 397.5 Z" fill="#5f5f5f" fill-rule="evenodd"/><rect x="1731" y="367" width="115" height="39" rx="3" fill="#2b2b2b"/><rect x="1846" y="355" width="28" height="65" rx="2" fill="#353535"/><rect x="1846" y="376" width="20" height="34" rx="0" fill="#bdbdbd"/><polygon points="1037.5,506 1059,469 1101,469 1122.5,507.5 1105,546 1065,546" fill="url(#nutgt1012)"/><circle cx="1080" cy="504" r="25" fill="#1e1e1e"/><circle cx="1080" cy="506" r="22" fill="#fff"/><rect x="1135" y="530" width="115" height="39" rx="3" fill="#2b2b2b"/><rect x="1250" y="517" width="29" height="68" rx="2" fill="#353535"/><rect x="1250" y="537" width="22" height="33" rx="0" fill="#bdbdbd"/><polygon points="1329,470 1350,430 1395,430 1415,470 1395,510 1352,510" fill="url(#nutgt1012)"/><circle cx="1371" cy="466.5" r="25" fill="#1e1e1e"/><circle cx="1371" cy="468.5" r="22" fill="#fff"/><path d="M1292 570 A50 50 0 1 0 1392 570 A50 50 0 1 0 1292 570 Z M1315 570 A27 27 0 1 1 1369 570 A27 27 0 1 1 1315 570 Z" fill="#5f5f5f" fill-rule="evenodd"/><rect x="1439" y="526" width="115" height="39" rx="3" fill="#2b2b2b"/><rect x="1411" y="511" width="28" height="68" rx="2" fill="#353535"/><rect x="1418" y="525" width="21" height="35" rx="0" fill="#bdbdbd"/><rect x="1601" y="554" width="25" height="66" rx="0" fill="#2b2b2b"/><polygon points="1588.7,531.6 1596.0,546.0 1634.0,546.0 1641.3,531.6" fill="#2c2c2c"/><rect x="1596" y="545" width="38" height="10" rx="0" fill="#2b2b2b"/><path d="M1572.5 498.5 A42.5 42.5 0 1 0 1657.5 498.5 A42.5 42.5 0 1 0 1572.5 498.5 Z M1591.5 498.5 A23.5 23.5 0 1 1 1638.5 498.5 A23.5 23.5 0 1 1 1591.5 498.5 Z" fill="url(#ringt1012)" fill-rule="evenodd"/><rect x="1686" y="472" width="39" height="114" rx="3" fill="#2b2b2b"/><rect x="1671" y="586" width="68" height="29" rx="2" fill="#353535"/><rect x="1684" y="588" width="33" height="20" rx="0" fill="#bdbdbd"/><polygon points="1765,526 1785,487.5 1832.5,487.5 1851,529 1832,566 1787.5,566" fill="url(#nutgt1012)"/><circle cx="1807.5" cy="523" r="26" fill="#1e1e1e"/><circle cx="1807.5" cy="525" r="23" fill="#fff"/></svg>
<div class="r" style="left:1056px;top:958px;width:44px;height:44px;background:#3d8f3d;"></div>
<svg class="r" style="left:1061px;top:963px" width="34" height="34" viewBox="1002 218 903 451" preserveAspectRatio="none"><defs><pattern id="thvt1061" width="4" height="4" patternUnits="userSpaceOnUse"><rect width="4" height="4" fill="#262626"/><rect y="0" width="4" height="1.2" fill="#4a4a4a"/></pattern><pattern id="thht1061" width="4" height="4" patternUnits="userSpaceOnUse"><rect width="4" height="4" fill="#262626"/><rect x="0" width="1.2" height="4" fill="#4a4a4a"/></pattern><radialGradient id="ringt1061" cx="0.5" cy="0.5" r="0.5"><stop offset="0.55" stop-color="#2e2e2e"/><stop offset="0.8" stop-color="#3a3a3a"/><stop offset="1" stop-color="#262626"/></radialGradient><radialGradient id="nutgt1061" cx="0.5" cy="0.5" r="0.5"><stop offset="0.5" stop-color="#666"/><stop offset="1" stop-color="#5a5a5a"/></radialGradient></defs><rect x="1002" y="218" width="903" height="451" fill="#fff"/><rect x="1036" y="286" width="66" height="24" rx="0" fill="#2b2b2b"/><polygon points="1125.3,274.1 1110.0,281.0 1110.0,318.0 1125.3,326.9" fill="#2c2c2c"/><rect x="1101" y="281" width="10" height="37" rx="0" fill="#2b2b2b"/><path d="M1116.0 300.5 A42.5 42.5 0 1 0 1201.0 300.5 A42.5 42.5 0 1 0 1116.0 300.5 Z M1135.0 300.5 A23.5 23.5 0 1 1 1182.0 300.5 A23.5 23.5 0 1 1 1135.0 300.5 Z" fill="url(#ringt1061)" fill-rule="evenodd"/><polygon points="1245,270 1266,231 1311,231 1331,271 1310,309 1267,309" fill="url(#nutgt1061)"/><circle cx="1288" cy="265" r="25" fill="#1e1e1e"/><circle cx="1288" cy="267" r="22" fill="#fff"/><rect x="1386" y="294" width="39" height="115" rx="3" fill="#2b2b2b"/><rect x="1374" y="266" width="67" height="28" rx="2" fill="#353535"/><rect x="1395" y="274" width="33" height="18" rx="0" fill="#bdbdbd"/><rect x="1101" y="391" width="115" height="38" rx="3" fill="#2b2b2b"/><rect x="1072" y="376" width="29" height="68" rx="2" fill="#353535"/><rect x="1080" y="388" width="21" height="34" rx="0" fill="#bdbdbd"/><rect x="1280" y="424" width="25" height="67" rx="0" fill="#2b2b2b"/><polygon points="1266.8,405.5 1274.0,416.0 1312.0,416.0 1320.2,405.5" fill="#2c2c2c"/><rect x="1274" y="415" width="38" height="10" rx="0" fill="#2b2b2b"/><path d="M1250.5 372 A43 43 0 1 0 1336.5 372 A43 43 0 1 0 1250.5 372 Z M1269.5 372 A24 24 0 1 1 1317.5 372 A24 24 0 1 1 1269.5 372 Z" fill="url(#ringt1061)" fill-rule="evenodd"/><path d="M1513 299 A50 50 0 1 0 1613 299 A50 50 0 1 0 1513 299 Z M1535.5 299 A27.5 27.5 0 1 1 1590.5 299 A27.5 27.5 0 1 1 1535.5 299 Z" fill="#5f5f5f" fill-rule="evenodd"/><rect x="1726" y="278" width="66" height="23" rx="0" fill="#2b2b2b"/><polygon points="1701.8,262.0 1711.0,270.0 1711.0,308.0 1701.8,314.0" fill="#2c2c2c"/><rect x="1710" y="270" width="16" height="38" rx="0" fill="#2b2b2b"/><path d="M1627 288 A42 42 0 1 0 1711 288 A42 42 0 1 0 1627 288 Z M1645 288 A24 24 0 1 1 1693 288 A24 24 0 1 1 1645 288 Z" fill="url(#ringt1061)" fill-rule="evenodd"/><rect x="1481" y="340" width="24" height="66" rx="0" fill="#2b2b2b"/><polygon points="1466.2,430.4 1474.0,416.0 1511.0,416.0 1518.8,430.4" fill="#2c2c2c"/><rect x="1474" y="405" width="37" height="12" rx="0" fill="#2b2b2b"/><path d="M1450.0 463.5 A42.5 42.5 0 1 0 1535.0 463.5 A42.5 42.5 0 1 0 1450.0 463.5 Z M1469.5 463.5 A23 23 0 1 1 1515.5 463.5 A23 23 0 1 1 1469.5 463.5 Z" fill="url(#ringt1061)" fill-rule="evenodd"/><path d="M1606 397.5 A50 50 0 1 0 1706 397.5 A50 50 0 1 0 1606 397.5 Z M1629 397.5 A27 27 0 1 1 1683 397.5 A27 27 0 1 1 1629 397.5 Z" fill="#5f5f5f" fill-rule="evenodd"/><rect x="1731" y="367" width="115" height="39" rx="3" fill="#2b2b2b"/><rect x="1846" y="355" width="28" height="65" rx="2" fill="#353535"/><rect x="1846" y="376" width="20" height="34" rx="0" fill="#bdbdbd"/><polygon points="1037.5,506 1059,469 1101,469 1122.5,507.5 1105,546 1065,546" fill="url(#nutgt1061)"/><circle cx="1080" cy="504" r="25" fill="#1e1e1e"/><circle cx="1080" cy="506" r="22" fill="#fff"/><rect x="1135" y="530" width="115" height="39" rx="3" fill="#2b2b2b"/><rect x="1250" y="517" width="29" height="68" rx="2" fill="#353535"/><rect x="1250" y="537" width="22" height="33" rx="0" fill="#bdbdbd"/><polygon points="1329,470 1350,430 1395,430 1415,470 1395,510 1352,510" fill="url(#nutgt1061)"/><circle cx="1371" cy="466.5" r="25" fill="#1e1e1e"/><circle cx="1371" cy="468.5" r="22" fill="#fff"/><path d="M1292 570 A50 50 0 1 0 1392 570 A50 50 0 1 0 1292 570 Z M1315 570 A27 27 0 1 1 1369 570 A27 27 0 1 1 1315 570 Z" fill="#5f5f5f" fill-rule="evenodd"/><rect x="1439" y="526" width="115" height="39" rx="3" fill="#2b2b2b"/><rect x="1411" y="511" width="28" height="68" rx="2" fill="#353535"/><rect x="1418" y="525" width="21" height="35" rx="0" fill="#bdbdbd"/><rect x="1601" y="554" width="25" height="66" rx="0" fill="#2b2b2b"/><polygon points="1588.7,531.6 1596.0,546.0 1634.0,546.0 1641.3,531.6" fill="#2c2c2c"/><rect x="1596" y="545" width="38" height="10" rx="0" fill="#2b2b2b"/><path d="M1572.5 498.5 A42.5 42.5 0 1 0 1657.5 498.5 A42.5 42.5 0 1 0 1572.5 498.5 Z M1591.5 498.5 A23.5 23.5 0 1 1 1638.5 498.5 A23.5 23.5 0 1 1 1591.5 498.5 Z" fill="url(#ringt1061)" fill-rule="evenodd"/><rect x="1686" y="472" width="39" height="114" rx="3" fill="#2b2b2b"/><rect x="1671" y="586" width="68" height="29" rx="2" fill="#353535"/><rect x="1684" y="588" width="33" height="20" rx="0" fill="#bdbdbd"/><polygon points="1765,526 1785,487.5 1832.5,487.5 1851,529 1832,566 1787.5,566" fill="url(#nutgt1061)"/><circle cx="1807.5" cy="523" r="26" fill="#1e1e1e"/><circle cx="1807.5" cy="525" r="23" fill="#fff"/></svg>
<div class="r" style="left:1822px;top:948px;width:100px;height:64px;background:#fcfcfc;"></div>
<div class="r" style="left:1824px;top:949px;width:47px;height:29px;background:#efefef;border:1px solid #e6e6e6;border-radius:4px;box-sizing:border-box"></div>
<div class="r" style="left:1873px;top:949px;width:47px;height:29px;background:#efefef;border:1px solid #e6e6e6;border-radius:4px;box-sizing:border-box"></div>
<div class="r" style="left:1824px;top:981px;width:47px;height:29px;background:#efefef;border:1px solid #e6e6e6;border-radius:4px;box-sizing:border-box"></div>
<div class="r" style="left:1873px;top:981px;width:47px;height:29px;background:#efefef;border:1px solid #d8d8d8;border-radius:4px;box-sizing:border-box"></div>
<svg class="r" style="left:1843px;top:955.5px;" width="10" height="17" viewBox="0 0 10 17"><path d="M8.5 1.5 L2 8.5 L8.5 15.5" fill="none" stroke="#777" stroke-width="2.2"/></svg>
<svg class="r" style="left:1891px;top:955.5px;" width="10" height="17" viewBox="0 0 10 17"><path d="M1.5 1.5 L8 8.5 L1.5 15.5" fill="none" stroke="#777" stroke-width="2.2"/></svg>
<svg class="r" style="left:1840px;top:987px;" width="16" height="18" viewBox="0 0 16 18"><path d="M2.5 2 Q2 1 3.2 1.5 L13.5 7.8 Q14.5 8.5 13.5 9.2 L4 15.5 Q2.5 16.5 2.5 15 Z" fill="none" stroke="#888" stroke-width="1.2"/></svg>
<svg class="r" style="left:1889px;top:988px;" width="14" height="17" viewBox="0 0 14 17"><path d="M4.5 2.5 V1 H9.5 V2.5" fill="none" stroke="#bbb" stroke-width="1"/><rect x="0.5" y="2.5" width="13" height="2.5" fill="#bbb"/><rect x="1.5" y="6" width="11" height="10" fill="#c4c4c4"/><path d="M4 7 V15 M7 7 V15 M10 7 V15" stroke="#a6a6a6" stroke-width="1.2"/></svg>
<div class="r" style="left:740px;top:181px;width:256px;height:761px;box-sizing:border-box;background:#fff;border:1px solid #828790"></div>
<div class="t" style="left:749.00px;top:188.10px;font-size:11.6px;color:#111;transform:scaleX(0.8738);">Name</div>
<div class="r" style="left:992px;top:184px;width:1px;height:21px;background:#e8e8e8;"></div>
<div class="r" style="left:742px;top:207px;width:252px;height:22px;box-sizing:border-box;background:#eef6f9;border:1px solid #95d3f2;border-radius:3px"></div>
<div class="r" style="left:750px;top:222px;width:1px;height:38px;background:#8080ff;"></div>
<div class="r" style="left:755px;top:217px;width:4px;height:1px;background:#8080ff;"></div>
<svg class="r" style="left:746px;top:213px;" width="9" height="9" viewBox="0 0 9 9"><rect x="0.5" y="0.5" width="8" height="8" rx="1" fill="#f2f2f2" stroke="#9a9a9a" stroke-width="1"/><path d="M2 4.5 H7 M4.5 2 V7" stroke="#27307a" stroke-width="1.1"/></svg>
<div class="r" style="left:755px;top:238px;width:4px;height:1px;background:#8080ff;"></div>
<svg class="r" style="left:746px;top:234px;" width="9" height="9" viewBox="0 0 9 9"><rect x="0.5" y="0.5" width="8" height="8" rx="1" fill="#f2f2f2" stroke="#9a9a9a" stroke-width="1"/><path d="M2 4.5 H7 M4.5 2 V7" stroke="#27307a" stroke-width="1.1"/></svg>
<div class="r" style="left:755px;top:259px;width:4px;height:1px;background:#8080ff;"></div>
<svg class="r" style="left:746px;top:255px;" width="9" height="9" viewBox="0 0 9 9"><rect x="0.5" y="0.5" width="8" height="8" rx="1" fill="#f2f2f2" stroke="#9a9a9a" stroke-width="1"/><path d="M2 4.5 H7 M4.5 2 V7" stroke="#27307a" stroke-width="1.1"/></svg>
<svg class="r" style="left:759px;top:208px;" width="20" height="19" viewBox="0 0 20 19"><rect x="0" y="0" width="20" height="19" rx="2" fill="#2089bd"/><circle cx="10" cy="4" r="1.3" fill="#8cc8ee"/><path d="M8 7.5 H11 V14.5 Q11 15.5 13 15.8 H7.5 Q9 15.5 9 14.5 V9 Q9 8.3 8 8.2 Z" fill="#8cc8ee"/></svg>
<svg class="r" style="left:759px;top:229px;" width="20" height="19" viewBox="0 0 20 19"><rect x="0" y="0" width="20" height="19" rx="3" fill="#009a00"/><path d="M5.5 9.5 L8.8 12.8 L14.8 6.2" fill="none" stroke="#fff" stroke-width="1.8"/></svg>
<svg class="r" style="left:759px;top:250px;" width="20" height="19" viewBox="0 0 20 19"><rect x="0" y="0" width="20" height="19" rx="3" fill="#009a00"/><path d="M5.5 9.5 L8.8 12.8 L14.8 6.2" fill="none" stroke="#fff" stroke-width="1.8"/></svg>
<div class="t" style="left:782.50px;top:211.10px;font-size:11.6px;color:#111;transform:scaleX(0.9335);">Programm</div>
<div class="t" style="left:782.50px;top:232.10px;font-size:11.6px;color:#111;">Positionierung PatMax-Muster</div>
<div class="t" style="left:782.50px;top:253.10px;font-size:11.6px;color:#111;transform:scaleX(0.9577);">Gesamtergebnis</div>
<div class="r" style="left:741px;top:925px;width:254px;height:15px;background:#f0f0f0;"></div>
<div class="r" style="left:760px;top:930px;width:80px;height:2px;background:#858585;"></div>
<div class="r" style="left:1002px;top:749px;width:918px;height:193px;box-sizing:border-box;background:#fff;border-top:1px solid #828790;border-left:1px solid #6b6b78;border-bottom:1px solid #828790"></div>
<div class="t" style="left:1011.00px;top:756.10px;font-size:11.6px;color:#111;transform:scaleX(0.8900);">Name</div>
<div class="t" style="left:1261.00px;top:756.10px;font-size:11.6px;color:#111;transform:scaleX(0.9877);">Wert</div>
<div class="t" style="left:1410.60px;top:756.10px;font-size:11.6px;color:#111;transform:scaleX(0.9920);">Aktuelle Vorgabe</div>
<div class="t" style="left:1560.50px;top:756.10px;font-size:11.6px;color:#111;transform:scaleX(0.9732);">Beschreibung</div>
<div class="r" style="left:1253px;top:752px;width:1px;height:23px;background:#e6e6e6;"></div>
<div class="r" style="left:1403px;top:752px;width:1px;height:23px;background:#e6e6e6;"></div>
<div class="r" style="left:1553px;top:752px;width:1px;height:23px;background:#e6e6e6;"></div>
<div class="r" style="left:1918px;top:752px;width:1px;height:23px;background:#e6e6e6;"></div>
<div class="r" style="left:1004px;top:775px;width:918px;height:22px;box-sizing:border-box;background:#eef6f9;border:1px solid #95d3f2;border-radius:3px"></div>
<div class="r" style="left:1012px;top:790px;width:1px;height:38px;background:#8080ff;"></div>
<div class="r" style="left:1017px;top:785px;width:4px;height:1px;background:#8080ff;"></div>
<svg class="r" style="left:1008px;top:781px;" width="9" height="9" viewBox="0 0 9 9"><rect x="0.5" y="0.5" width="8" height="8" rx="1" fill="#f2f2f2" stroke="#9a9a9a" stroke-width="1"/><path d="M2 4.5 H7 M4.5 2 V7" stroke="#27307a" stroke-width="1.1"/></svg>
<div class="r" style="left:1017px;top:806px;width:4px;height:1px;background:#8080ff;"></div>
<svg class="r" style="left:1008px;top:802px;" width="9" height="9" viewBox="0 0 9 9"><rect x="0.5" y="0.5" width="8" height="8" rx="1" fill="#f2f2f2" stroke="#9a9a9a" stroke-width="1"/><path d="M2 4.5 H7 M4.5 2 V7" stroke="#27307a" stroke-width="1.1"/></svg>
<div class="r" style="left:1017px;top:827px;width:4px;height:1px;background:#8080ff;"></div>
<svg class="r" style="left:1008px;top:823px;" width="9" height="9" viewBox="0 0 9 9"><rect x="0.5" y="0.5" width="8" height="8" rx="1" fill="#f2f2f2" stroke="#9a9a9a" stroke-width="1"/><path d="M2 4.5 H7 M4.5 2 V7" stroke="#27307a" stroke-width="1.1"/></svg>
<svg class="r" style="left:1021px;top:776px;" width="20" height="19" viewBox="0 0 20 19"><rect x="0" y="0" width="20" height="19" rx="2" fill="#2089bd"/><circle cx="10" cy="4" r="1.3" fill="#8cc8ee"/><path d="M8 7.5 H11 V14.5 Q11 15.5 13 15.8 H7.5 Q9 15.5 9 14.5 V9 Q9 8.3 8 8.2 Z" fill="#8cc8ee"/></svg>
<svg class="r" style="left:1021px;top:797px;" width="20" height="19" viewBox="0 0 20 19"><rect x="0" y="0" width="20" height="19" rx="3" fill="#009a00"/><path d="M5.5 9.5 L8.8 12.8 L14.8 6.2" fill="none" stroke="#fff" stroke-width="1.8"/></svg>
<svg class="r" style="left:1021px;top:818px;" width="20" height="19" viewBox="0 0 20 19"><rect x="0" y="0" width="20" height="19" rx="3" fill="#009a00"/><path d="M5.5 9.5 L8.8 12.8 L14.8 6.2" fill="none" stroke="#fff" stroke-width="1.8"/></svg>
<div class="t" style="left:1044.80px;top:779.40px;font-size:11.6px;color:#111;transform:scaleX(0.9353);">Programm</div>
<div class="t" style="left:1044.80px;top:800.40px;font-size:11.6px;color:#111;">Anwesenheit Multi-PatMax-Muster</div>
<div class="t" style="left:1044.80px;top:821.40px;font-size:11.6px;color:#111;transform:scaleX(0.9589);">Gesamtergebnis</div>
<div class="t" style="left:1259.00px;top:779.40px;font-size:11.6px;color:#111;transform:scaleX(0.9257);">Prog1 [1]</div>
<div class="t" style="left:1259.00px;top:800.40px;font-size:11.6px;color:#111;transform:scaleX(0.9684);">Objekt (Pattern4) mit 100,...</div>
<div class="t" style="left:1259.00px;top:821.40px;font-size:11.6px;color:#111;transform:scaleX(0.7741);">PASS</div>
</body></html>
